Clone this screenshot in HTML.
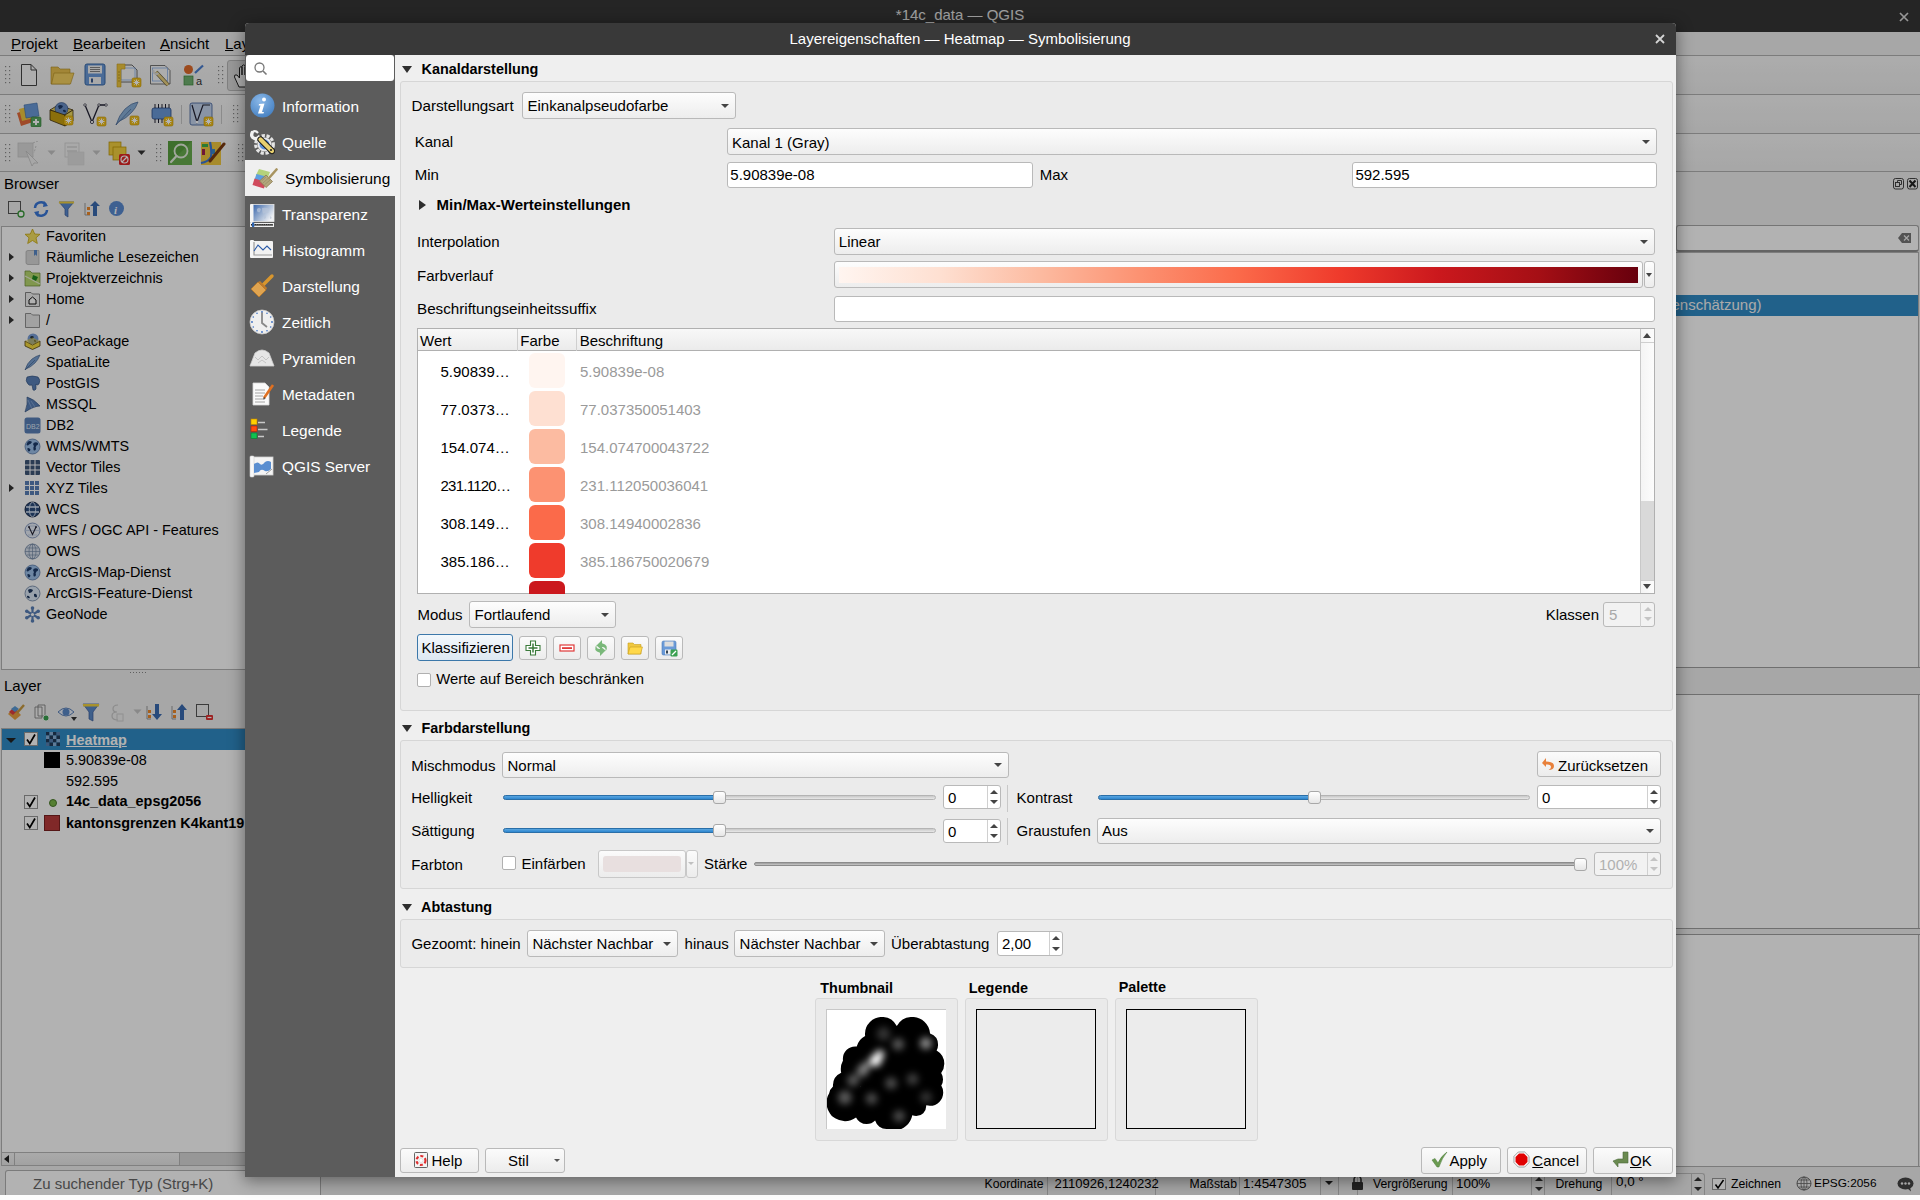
<!DOCTYPE html><html><head><meta charset="utf-8"><style>
*{margin:0;padding:0;box-sizing:border-box}
html,body{width:1920px;height:1200px;overflow:hidden;background:#fdfdfd;font-family:"Liberation Sans",sans-serif}
.t{position:absolute;white-space:nowrap}
.a{position:absolute}
</style></head><body><div class="a" style="left:0;top:0;width:1920px;height:1195px;background:#efefef;overflow:hidden">
<div style="position:absolute;left:0px;top:0px;width:1920px;height:32px;background:#363636"></div>
<div class="t" style="left:960px;top:7.30px;font-size:15px;line-height:15px;font-weight:400;color:#e6e6e6;transform:translateX(-50%)">*14c_data — QGIS</div>
<svg class="a" style="left:1899px;top:12px" width="10" height="10"><path d="M1 1 L9 9 M9 1 L1 9" stroke="#d8d8d8" stroke-width="1.7"/></svg>
<div class="t" style="left:11px;top:36.30px;font-size:15px;line-height:15px;font-weight:400;color:#000;"><u>P</u>rojekt</div>
<div class="t" style="left:73px;top:36.30px;font-size:15px;line-height:15px;font-weight:400;color:#000;"><u>B</u>earbeiten</div>
<div class="t" style="left:160px;top:36.30px;font-size:15px;line-height:15px;font-weight:400;color:#000;"><u>A</u>nsicht</div>
<div class="t" style="left:225px;top:36.30px;font-size:15px;line-height:15px;font-weight:400;color:#000;"><u>L</u>ayer</div>
<div style="position:absolute;left:0px;top:55px;width:1920px;height:1px;background:#b2b2b2"></div>
<div style="position:absolute;left:0px;top:94px;width:1920px;height:1px;background:#b2b2b2"></div>
<div style="position:absolute;left:0px;top:133px;width:1920px;height:1px;background:#b2b2b2"></div>
<div style="position:absolute;left:0px;top:171px;width:1920px;height:1px;background:#b2b2b2"></div>
<div style="position:absolute;left:0px;top:56px;width:1920px;height:38px;background:linear-gradient(#f7f7f7,#efefef)"></div>
<div style="position:absolute;left:0px;top:95px;width:1920px;height:38px;background:linear-gradient(#f7f7f7,#efefef)"></div>
<div style="position:absolute;left:0px;top:134px;width:1920px;height:37px;background:linear-gradient(#f7f7f7,#efefef)"></div>
<div class="t" style="left:4px;top:176.30px;font-size:15px;line-height:15px;font-weight:400;color:#000;">Browser</div>
<div style="position:absolute;left:1px;top:226px;width:260px;height:444px;border-top:1px solid #b4b4b4;border-left:1px solid #b4b4b4;border-bottom:1px solid #b4b4b4;background:#fff"></div>
<div class="t" style="left:46px;top:229.41px;font-size:14.4px;line-height:14.4px;font-weight:400;color:#000;">Favoriten</div>
<div class="t" style="left:46px;top:250.41px;font-size:14.4px;line-height:14.4px;font-weight:400;color:#000;">Räumliche Lesezeichen</div>
<div class="a" style="left:9px;top:253.1px;width:0;height:0;border-left:5px solid #333;border-top:4px solid transparent;border-bottom:4px solid transparent"></div>
<div class="t" style="left:46px;top:271.41px;font-size:14.4px;line-height:14.4px;font-weight:400;color:#000;">Projektverzeichnis</div>
<div class="a" style="left:9px;top:274.1px;width:0;height:0;border-left:5px solid #333;border-top:4px solid transparent;border-bottom:4px solid transparent"></div>
<div class="t" style="left:46px;top:292.41px;font-size:14.4px;line-height:14.4px;font-weight:400;color:#000;">Home</div>
<div class="a" style="left:9px;top:295.1px;width:0;height:0;border-left:5px solid #333;border-top:4px solid transparent;border-bottom:4px solid transparent"></div>
<div class="t" style="left:46px;top:313.41px;font-size:14.4px;line-height:14.4px;font-weight:400;color:#000;">/</div>
<div class="a" style="left:9px;top:316.1px;width:0;height:0;border-left:5px solid #333;border-top:4px solid transparent;border-bottom:4px solid transparent"></div>
<div class="t" style="left:46px;top:334.41px;font-size:14.4px;line-height:14.4px;font-weight:400;color:#000;">GeoPackage</div>
<div class="t" style="left:46px;top:355.41px;font-size:14.4px;line-height:14.4px;font-weight:400;color:#000;">SpatiaLite</div>
<div class="t" style="left:46px;top:376.41px;font-size:14.4px;line-height:14.4px;font-weight:400;color:#000;">PostGIS</div>
<div class="t" style="left:46px;top:397.41px;font-size:14.4px;line-height:14.4px;font-weight:400;color:#000;">MSSQL</div>
<div class="t" style="left:46px;top:418.41px;font-size:14.4px;line-height:14.4px;font-weight:400;color:#000;">DB2</div>
<div class="t" style="left:46px;top:439.41px;font-size:14.4px;line-height:14.4px;font-weight:400;color:#000;">WMS/WMTS</div>
<div class="t" style="left:46px;top:460.41px;font-size:14.4px;line-height:14.4px;font-weight:400;color:#000;">Vector Tiles</div>
<div class="t" style="left:46px;top:481.41px;font-size:14.4px;line-height:14.4px;font-weight:400;color:#000;">XYZ Tiles</div>
<div class="a" style="left:9px;top:484.1px;width:0;height:0;border-left:5px solid #333;border-top:4px solid transparent;border-bottom:4px solid transparent"></div>
<div class="t" style="left:46px;top:502.41px;font-size:14.4px;line-height:14.4px;font-weight:400;color:#000;">WCS</div>
<div class="t" style="left:46px;top:523.41px;font-size:14.4px;line-height:14.4px;font-weight:400;color:#000;">WFS / OGC API - Features</div>
<div class="t" style="left:46px;top:544.41px;font-size:14.4px;line-height:14.4px;font-weight:400;color:#000;">OWS</div>
<div class="t" style="left:46px;top:565.41px;font-size:14.4px;line-height:14.4px;font-weight:400;color:#000;">ArcGIS-Map-Dienst</div>
<div class="t" style="left:46px;top:586.41px;font-size:14.4px;line-height:14.4px;font-weight:400;color:#000;">ArcGIS-Feature-Dienst</div>
<div class="t" style="left:46px;top:607.41px;font-size:14.4px;line-height:14.4px;font-weight:400;color:#000;">GeoNode</div>
<div style="position:absolute;left:0px;top:670px;width:260px;height:4px;background:#efefef"></div>
<div style="position:absolute;left:130px;top:672px;width:1px;height:1px;background:#888"></div>
<div style="position:absolute;left:133px;top:672px;width:1px;height:1px;background:#888"></div>
<div style="position:absolute;left:136px;top:672px;width:1px;height:1px;background:#888"></div>
<div style="position:absolute;left:139px;top:672px;width:1px;height:1px;background:#888"></div>
<div style="position:absolute;left:142px;top:672px;width:1px;height:1px;background:#888"></div>
<div style="position:absolute;left:145px;top:672px;width:1px;height:1px;background:#888"></div>
<div style="position:absolute;left:1690px;top:670px;width:1px;height:1px;background:#888"></div>
<div style="position:absolute;left:1690px;top:930px;width:1px;height:1px;background:#888"></div>
<div style="position:absolute;left:1693px;top:670px;width:1px;height:1px;background:#888"></div>
<div style="position:absolute;left:1693px;top:930px;width:1px;height:1px;background:#888"></div>
<div style="position:absolute;left:1696px;top:670px;width:1px;height:1px;background:#888"></div>
<div style="position:absolute;left:1696px;top:930px;width:1px;height:1px;background:#888"></div>
<div style="position:absolute;left:1699px;top:670px;width:1px;height:1px;background:#888"></div>
<div style="position:absolute;left:1699px;top:930px;width:1px;height:1px;background:#888"></div>
<div style="position:absolute;left:1702px;top:670px;width:1px;height:1px;background:#888"></div>
<div style="position:absolute;left:1702px;top:930px;width:1px;height:1px;background:#888"></div>
<div style="position:absolute;left:1705px;top:670px;width:1px;height:1px;background:#888"></div>
<div style="position:absolute;left:1705px;top:930px;width:1px;height:1px;background:#888"></div>
<div class="t" style="left:4px;top:678.30px;font-size:15px;line-height:15px;font-weight:400;color:#000;">Layer</div>
<div style="position:absolute;left:1px;top:728px;width:260px;height:424px;border-top:1px solid #b4b4b4;border-left:1px solid #b4b4b4;background:#fff"></div>
<div style="position:absolute;left:2px;top:729px;width:258px;height:21px;background:#308cc6"></div>
<div class="t" style="left:66px;top:732.51px;font-size:14.4px;line-height:14.4px;font-weight:700;color:#fff;"><u>Heatmap</u></div>
<div class="t" style="left:66px;top:753.41px;font-size:14.4px;line-height:14.4px;font-weight:400;color:#000;">5.90839e-08</div>
<div style="position:absolute;left:44px;top:752px;width:16px;height:16px;background:#000"></div>
<div class="t" style="left:66px;top:774.21px;font-size:14.4px;line-height:14.4px;font-weight:400;color:#000;">592.595</div>
<div class="t" style="left:66px;top:794.41px;font-size:14.4px;line-height:14.4px;font-weight:700;color:#000;">14c_data_epsg2056</div>
<div class="t" style="left:66px;top:815.81px;font-size:14.4px;line-height:14.4px;font-weight:700;color:#000;">kantonsgrenzen K4kant19</div>
<div style="position:absolute;left:44px;top:815px;width:16px;height:16px;background:#b83a3a;border:1px solid #7a2020"></div>
<div style="position:absolute;left:24px;top:732px;width:14px;height:14px;background:#fff;border:1px solid #999"></div>
<svg class="a" style="left:25px;top:733px" width="12" height="12"><path d="M2 6.5 L4.8 10.5 L10 1.5" stroke="#000" stroke-width="1.7" fill="none"/></svg>
<div style="position:absolute;left:24px;top:795px;width:14px;height:14px;background:#fff;border:1px solid #999"></div>
<svg class="a" style="left:25px;top:796px" width="12" height="12"><path d="M2 6.5 L4.8 10.5 L10 1.5" stroke="#000" stroke-width="1.7" fill="none"/></svg>
<div style="position:absolute;left:24px;top:816px;width:14px;height:14px;background:#fff;border:1px solid #999"></div>
<svg class="a" style="left:25px;top:817px" width="12" height="12"><path d="M2 6.5 L4.8 10.5 L10 1.5" stroke="#000" stroke-width="1.7" fill="none"/></svg>
<div class="a" style="left:6px;top:738px;width:0;height:0;border-top:5px solid #222;border-left:5px solid transparent;border-right:5px solid transparent"></div>
<div style="position:absolute;left:48.5px;top:798.5px;width:8px;height:8px;background:#7ab648;border-radius:50%;border:1px solid #4a7a2a"></div>
<div style="position:absolute;left:1px;top:1152px;width:260px;height:14px;background:linear-gradient(#f4f4f4,#e8e8e8);border:1px solid #b8b8b8"></div>
<div style="position:absolute;left:14px;top:1152px;width:1px;height:14px;background:#b8b8b8"></div>
<div style="position:absolute;left:179px;top:1153px;width:82px;height:12px;background:#d8d8d8;border-left:1px solid #b8b8b8"></div>
<div class="a" style="left:4px;top:1155px;width:0;height:0;border-right:5px solid #222;border-top:4px solid transparent;border-bottom:4px solid transparent"></div>
<svg class="a" style="left:11px;top:1175px" width="15" height="15"><circle cx="6" cy="6" r="4.5" fill="none" stroke="#666" stroke-width="1.4"/><line x1="9.3" y1="9.3" x2="13.5" y2="13.5" stroke="#666" stroke-width="1.8"/></svg>
<div style="position:absolute;left:5px;top:1170px;width:316px;height:25px;background:#fff;border:1px solid #b0b0b0;border-bottom:none;border-radius:3px 3px 0 0"></div>
<div class="t" style="left:33px;top:1176.30px;font-size:15px;line-height:15px;font-weight:400;color:#666;">Zu suchender Typ (Strg+K)</div>
<div style="position:absolute;left:1676px;top:225px;width:243px;height:27px;background:#fff;border:1px solid #a8a8a8;border-bottom:2px solid #909090;border-radius:3px"></div>
<svg class="a" style="left:1897px;top:232px" width="15" height="12"><path d="M1 6 L5 1 H14 V11 H5 Z" fill="#777"/><path d="M7 3.5 L12 8.5 M12 3.5 L7 8.5" stroke="#efefef" stroke-width="1.2"/></svg>
<svg class="a" style="left:1893px;top:178px" width="26" height="12"><rect x="0.5" y="0.5" width="10" height="10.5" rx="2" fill="none" stroke="#333" stroke-width="0.9"/><rect x="2.5" y="4.5" width="4" height="4" fill="none" stroke="#333" stroke-width="0.9"/><path d="M4.5 4.5 V2.5 H8.5 V6.5 H6.5" fill="none" stroke="#333" stroke-width="0.9"/><rect x="14.5" y="0.5" width="10" height="10.5" rx="2" fill="none" stroke="#333" stroke-width="0.9"/><path d="M16.5 2.5 L22.5 9 M22.5 2.5 L16.5 9" stroke="#222" stroke-width="2"/></svg>
<svg class="a" style="left:1893px;top:678px" width="26" height="12"><rect x="0.5" y="0.5" width="10" height="10.5" rx="2" fill="none" stroke="#333" stroke-width="0.9"/><rect x="2.5" y="4.5" width="4" height="4" fill="none" stroke="#333" stroke-width="0.9"/><path d="M4.5 4.5 V2.5 H8.5 V6.5 H6.5" fill="none" stroke="#333" stroke-width="0.9"/><rect x="14.5" y="0.5" width="10" height="10.5" rx="2" fill="none" stroke="#333" stroke-width="0.9"/><path d="M16.5 2.5 L22.5 9 M22.5 2.5 L16.5 9" stroke="#222" stroke-width="2"/></svg>
<div style="position:absolute;left:1676px;top:252px;width:243px;height:415px;border-top:1px solid #b4b4b4;border-right:1px solid #b4b4b4;background:#fff"></div>
<div style="position:absolute;left:1676px;top:295px;width:242px;height:21px;background:#308cc6"></div>
<div class="t" style="left:1538.1px;top:297.30px;font-size:15px;line-height:15px;font-weight:400;color:#f4f4f4;">Heatmap (Kerndichtenschätzung)</div>
<div style="position:absolute;left:1676px;top:667px;width:244px;height:1px;background:#a0a0a0"></div>
<div style="position:absolute;left:1676px;top:668px;width:244px;height:27px;background:#efefef"></div>
<div style="position:absolute;left:1676px;top:694px;width:244px;height:1px;background:#a0a0a0"></div>
<div style="position:absolute;left:1676px;top:695px;width:243px;height:233px;background:#fff;border-right:1px solid #b4b4b4"></div>
<div style="position:absolute;left:1676px;top:935px;width:243px;height:231px;background:#fff;border-right:1px solid #b4b4b4"></div>
<div style="position:absolute;left:1676px;top:928px;width:244px;height:1px;background:#a0a0a0"></div>
<div style="position:absolute;left:1676px;top:929px;width:244px;height:5px;background:#efefef"></div>
<div style="position:absolute;left:1676px;top:934px;width:244px;height:1px;background:#a0a0a0"></div>
<div style="position:absolute;left:1676px;top:1166px;width:244px;height:1px;background:#b0b0b0"></div>
<div class="t" style="left:984.5px;top:1177.67px;font-size:12.2px;line-height:12.2px;font-weight:400;color:#000;">Koordinate</div>
<div style="position:absolute;left:1047px;top:1173px;width:109px;height:22px;background:#efefef;border:1px solid #c0c0c0;border-bottom:none;border-radius:3px 3px 0 0"></div>
<div class="t" style="left:1054.5px;top:1176.95px;font-size:13.054px;line-height:13.054px;font-weight:400;color:#000;">2110926,1240232</div>
<div class="t" style="left:1189.5px;top:1177.67px;font-size:12.2px;line-height:12.2px;font-weight:400;color:#000;">Maßstab</div>
<div style="position:absolute;left:1239px;top:1173px;width:100px;height:22px;background:#efefef;border:1px solid #c0c0c0;border-bottom:none"></div>
<div style="position:absolute;left:1320px;top:1173px;width:1px;height:22px;background:#c0c0c0"></div>
<div class="t" style="left:1243px;top:1176.64px;font-size:13.42px;line-height:13.42px;font-weight:400;color:#000;">1:4547305</div>
<div class="a" style="left:1325px;top:1181px;width:0;height:0;border-top:4px solid #222;border-left:4px solid transparent;border-right:4px solid transparent"></div>
<div style="position:absolute;left:1357px;top:1173px;width:1px;height:22px;background:#c0c0c0"></div>
<svg class="a" style="left:1351px;top:1175px" width="13" height="15"><path d="M3 7 V4.5 a3.5 3.5 0 0 1 7 0 V7" stroke="#333" stroke-width="1.6" fill="none"/><rect x="1" y="7" width="11" height="8" rx="1" fill="#333"/></svg>
<div class="t" style="left:1373px;top:1177.67px;font-size:12.2px;line-height:12.2px;font-weight:400;color:#000;">Vergrößerung</div>
<div style="position:absolute;left:1452px;top:1173px;width:93px;height:22px;background:#efefef;border:1px solid #c0c0c0;border-bottom:none"></div>
<div style="position:absolute;left:1531px;top:1173px;width:1px;height:22px;background:#c0c0c0"></div>
<div class="t" style="left:1456px;top:1176.64px;font-size:13.42px;line-height:13.42px;font-weight:400;color:#000;">100%</div>
<div class="t" style="left:1555.5px;top:1177.67px;font-size:12.2px;line-height:12.2px;font-weight:400;color:#000;">Drehung</div>
<div style="position:absolute;left:1611px;top:1173px;width:94px;height:22px;background:#efefef;border:1px solid #c0c0c0;border-bottom:none;border-radius:3px 3px 0 0"></div>
<div style="position:absolute;left:1691px;top:1173px;width:1px;height:22px;background:#c0c0c0"></div>
<div class="t" style="left:1616px;top:1174.64px;font-size:13.42px;line-height:13.42px;font-weight:400;color:#000;">0,0 °</div>
<div class="a" style="left:1535px;top:1177px;width:0;height:0;border-bottom:4px solid #333;border-left:4px solid transparent;border-right:4px solid transparent"></div>
<div class="a" style="left:1535px;top:1187px;width:0;height:0;border-top:4px solid #333;border-left:4px solid transparent;border-right:4px solid transparent"></div>
<div class="a" style="left:1694px;top:1177px;width:0;height:0;border-bottom:4px solid #333;border-left:4px solid transparent;border-right:4px solid transparent"></div>
<div class="a" style="left:1694px;top:1187px;width:0;height:0;border-top:4px solid #333;border-left:4px solid transparent;border-right:4px solid transparent"></div>
<div style="position:absolute;left:1712px;top:1178px;width:14px;height:12px;background:#fff;border:1px solid #999"></div>
<svg class="a" style="left:1714px;top:1179px" width="11" height="11"><path d="M1.5 5.5 L4 9 L9.5 1" stroke="#000" stroke-width="1.5" fill="none"/></svg>
<div class="t" style="left:1731px;top:1177.67px;font-size:12.2px;line-height:12.2px;font-weight:400;color:#000;">Zeichnen</div>
<svg class="a" style="left:1796px;top:1176px" width="16" height="15"><ellipse cx="8" cy="7.5" rx="7" ry="6.5" fill="none" stroke="#666" stroke-width="1"/><path d="M1 7.5 H15 M8 1 V14 M3 4 H13 M3 11 H13" stroke="#666" stroke-width="0.8"/><ellipse cx="8" cy="7.5" rx="3" ry="6.5" fill="none" stroke="#666" stroke-width="0.8"/></svg>
<div class="t" style="left:1814px;top:1177.98px;font-size:11.834px;line-height:11.834px;font-weight:400;color:#000;">EPSG:2056</div>
<svg class="a" style="left:1897px;top:1177px" width="17" height="15"><ellipse cx="8.5" cy="6.5" rx="8" ry="6" fill="#444"/><path d="M10 11 L14 14.5 L13 10Z" fill="#444"/><circle cx="5" cy="6.5" r="1.2" fill="#eee"/><circle cx="8.5" cy="6.5" r="1.2" fill="#eee"/><circle cx="12" cy="6.5" r="1.2" fill="#eee"/></svg>
<div style="position:absolute;left:0px;top:1195px;width:1920px;height:5px;background:#fefefe"></div>
</div>
<svg class="a" style="left:5px;top:66px" width="6" height="18" viewBox="0 0 6 18"><rect x="0" y="0" width="1.2" height="1.2" fill="#8a8a8a"/><rect x="0" y="4" width="1.2" height="1.2" fill="#8a8a8a"/><rect x="0" y="8" width="1.2" height="1.2" fill="#8a8a8a"/><rect x="0" y="12" width="1.2" height="1.2" fill="#8a8a8a"/><rect x="0" y="16" width="1.2" height="1.2" fill="#8a8a8a"/><rect x="4" y="0" width="1.2" height="1.2" fill="#8a8a8a"/><rect x="4" y="4" width="1.2" height="1.2" fill="#8a8a8a"/><rect x="4" y="8" width="1.2" height="1.2" fill="#8a8a8a"/><rect x="4" y="12" width="1.2" height="1.2" fill="#8a8a8a"/><rect x="4" y="16" width="1.2" height="1.2" fill="#8a8a8a"/></svg>
<svg class="a" style="left:20px;top:63px" width="19" height="24" viewBox="0 0 19 24"><path d="M1.5 1.5 H11 L16.5 7 V22.5 H1.5 Z" fill="#f8f8f8" stroke="#444" stroke-width="1"/><path d="M11 1.5 V7 H16.5" fill="none" stroke="#444" stroke-width="1"/></svg>
<svg class="a" style="left:50px;top:65px" width="25" height="21" viewBox="0 0 25 21"><path d="M1 2 H8 L10 4 H20 V19 H1 Z" fill="#e8c050" stroke="#b08a20" stroke-width="0.6"/><path d="M1.5 19 L4 8 H24 L20.5 19 Z" fill="#f4d060" stroke="#b08a20" stroke-width="0.6"/></svg>
<svg class="a" style="left:84px;top:63px" width="22" height="23" viewBox="0 0 22 23"><rect x="1" y="1" width="20" height="21" rx="2" fill="#6a9ad8" stroke="#3a6aa8" stroke-width="1"/><rect x="4" y="2.5" width="14" height="8" fill="#f2f2f2"/><path d="M6 4.5 H16 M6 6.5 H16 M6 8.5 H16" stroke="#555" stroke-width="0.7"/><rect x="5" y="14" width="12" height="7" fill="#f2f2f2"/><rect x="7" y="15.5" width="2" height="4" fill="#3a5a90"/></svg>
<svg class="a" style="left:116px;top:63px" width="26" height="25" viewBox="0 0 26 25"><path d="M3 2 H16 L21 7 V19 H3 Z" fill="#f8f8f8" stroke="#444" stroke-width="0.8"/><rect x="5" y="5" width="14" height="12" fill="none" stroke="#8ab0e8" stroke-width="0.8"/><path d="M1 1 H9 V6 H5 V24 H1 Z" fill="#f0c840" stroke="#c89a20" stroke-width="0.6"/><path d="M2 9 H4 M2 12 H4 M2 15 H4 M2 18 H4" stroke="#9a7a10" stroke-width="0.6"/><rect x="16" y="15" width="9" height="9" rx="1.5" fill="#f0c020" stroke="#c89600" stroke-width="0.6"/><path d="M20.5 16.5 V22.5 M17.5 19.5 H23.5 M18.3 17.3 L22.7 21.7 M22.7 17.3 L18.3 21.7" stroke="#fff" stroke-width="1"/></svg>
<svg class="a" style="left:149px;top:64px" width="25" height="25" viewBox="0 0 25 25"><path d="M1.5 1.5 H16 L21 6.5 V20 H1.5 Z" fill="#f8f8f8" stroke="#555" stroke-width="0.8"/><rect x="3.5" y="4" width="15" height="13" fill="none" stroke="#8ab0e8" stroke-width="0.8"/><path d="M7 8 L19 21" stroke="#5a5030" stroke-width="4"/><path d="M7 8 L19 21" stroke="#e8d080" stroke-width="2.6"/><path d="M4.5 6 a3 3 0 0 0 5 3" stroke="#ddd" stroke-width="2" fill="none"/></svg>
<svg class="a" style="left:183px;top:64px" width="24" height="23" viewBox="0 0 24 23"><circle cx="5.5" cy="5.5" r="4.5" fill="#e06a2a"/><path d="M12 9 L20 1.5" stroke="#4a7ed0" stroke-width="2.2"/><rect x="1" y="12" width="9" height="9" fill="#70b070" stroke="#3a8a3a" stroke-width="0.7"/><text x="13" y="21" font-size="11" font-family="Liberation Sans" fill="#333">a</text></svg>
<svg class="a" style="left:218px;top:66px" width="6" height="18" viewBox="0 0 6 18"><rect x="0" y="0" width="1.2" height="1.2" fill="#8a8a8a"/><rect x="0" y="4" width="1.2" height="1.2" fill="#8a8a8a"/><rect x="0" y="8" width="1.2" height="1.2" fill="#8a8a8a"/><rect x="0" y="12" width="1.2" height="1.2" fill="#8a8a8a"/><rect x="0" y="16" width="1.2" height="1.2" fill="#8a8a8a"/><rect x="4" y="0" width="1.2" height="1.2" fill="#8a8a8a"/><rect x="4" y="4" width="1.2" height="1.2" fill="#8a8a8a"/><rect x="4" y="8" width="1.2" height="1.2" fill="#8a8a8a"/><rect x="4" y="12" width="1.2" height="1.2" fill="#8a8a8a"/><rect x="4" y="16" width="1.2" height="1.2" fill="#8a8a8a"/></svg>
<div style="position:absolute;left:227px;top:60px;width:30px;height:31px;background:#dcdcdc;border:1px solid #b8b8b8;border-radius:3px"></div>
<svg class="a" style="left:233px;top:64px" width="22" height="24" viewBox="0 0 22 24"><path d="M6 23 L1.5 13 Q1 10 4 11 L6.5 14 V4 Q7 2 9 3 V11 V2 Q10 0 12 1.5 V11 V3 Q13 1 15 2.5 V12 V5 Q16 3.5 18 5 V15 Q17 21 14 23 Z" fill="#fff" stroke="#222" stroke-width="1"/></svg>
<svg class="a" style="left:5px;top:105px" width="6" height="18" viewBox="0 0 6 18"><rect x="0" y="0" width="1.2" height="1.2" fill="#8a8a8a"/><rect x="0" y="4" width="1.2" height="1.2" fill="#8a8a8a"/><rect x="0" y="8" width="1.2" height="1.2" fill="#8a8a8a"/><rect x="0" y="12" width="1.2" height="1.2" fill="#8a8a8a"/><rect x="0" y="16" width="1.2" height="1.2" fill="#8a8a8a"/><rect x="4" y="0" width="1.2" height="1.2" fill="#8a8a8a"/><rect x="4" y="4" width="1.2" height="1.2" fill="#8a8a8a"/><rect x="4" y="8" width="1.2" height="1.2" fill="#8a8a8a"/><rect x="4" y="12" width="1.2" height="1.2" fill="#8a8a8a"/><rect x="4" y="16" width="1.2" height="1.2" fill="#8a8a8a"/></svg>
<svg class="a" style="left:16px;top:102px" width="26" height="25" viewBox="0 0 26 25"><path d="M1 11 L13 7 L17 20 L5 24 Z" fill="#e46a3a"/><path d="M3 7 L15 4 L18 16 L6 19 Z" fill="#f0c840"/><path d="M8 3 L21 1 L23 14 L10 16 Z" fill="#6a9ad8" stroke="#3a6aa8" stroke-width="0.6"/><rect x="15" y="15" width="10" height="10" rx="1.5" fill="#5aa860" stroke="#2a7a30" stroke-width="0.6"/><path d="M20 17 V23 M17 20 H23" stroke="#fff" stroke-width="2"/></svg>
<svg class="a" style="left:49px;top:101px" width="26" height="26" viewBox="0 0 26 26"><path d="M1 9 L9 4 L24 9 L16 14 Z" fill="#e8d060" stroke="#403010" stroke-width="0.8"/><circle cx="12.5" cy="8" r="6.5" fill="#6a90c8" stroke="#2a4a80" stroke-width="0.6"/><path d="M9 5 Q11 3 14 5 Q13 8 10 8Z M14 9 Q17 8 17 11 Q15 12 14 10Z" fill="#1e3a68"/><path d="M1 9 L16 14 V25 L1 19 Z" fill="#c8a010" stroke="#403010" stroke-width="0.8"/><path d="M16 14 L24 9 V20 L16 25 Z" fill="#f0dc60" stroke="#403010" stroke-width="0.8"/><rect x="15" y="15" width="9" height="9" rx="1.5" fill="#f0c020" stroke="#c89600" stroke-width="0.6"/><path d="M19.5 16.5 V22.5 M16.5 19.5 H22.5 M17.3 17.3 L21.7 21.7 M21.7 17.3 L17.3 21.7" stroke="#fff" stroke-width="1"/></svg>
<svg class="a" style="left:82px;top:102px" width="26" height="25" viewBox="0 0 26 25"><path d="M3 3 L10 20 L17 3 L24 3" stroke="#223" stroke-width="1.3" fill="none"/><path d="M1.5 3 L3 1.5 L4.5 3 L3 4.5Z M15.5 3 L17 1.5 L18.5 3 L17 4.5Z M22.5 3 L24 1.5 L25.5 3 L24 4.5Z" fill="#fff" stroke="#223" stroke-width="0.8"/><circle cx="10" cy="20" r="1.6" fill="#fff" stroke="#223" stroke-width="0.8"/><rect x="15" y="15" width="9" height="9" rx="1.5" fill="#f0c020" stroke="#c89600" stroke-width="0.6"/><path d="M19.5 16.5 V22.5 M16.5 19.5 H22.5 M17.3 17.3 L21.7 21.7 M21.7 17.3 L17.3 21.7" stroke="#fff" stroke-width="1"/></svg>
<svg class="a" style="left:115px;top:101px" width="26" height="26" viewBox="0 0 26 26"><path d="M1 24 Q4 14 10 8 Q16 2 23 1 Q21 7 17 11 Q12 17 3 21 Z" fill="#8ab0d8" stroke="#4a6a98" stroke-width="0.7"/><path d="M1 24 L16 8" stroke="#4a6a98" stroke-width="0.7"/><rect x="15" y="15" width="9" height="9" rx="1.5" fill="#f0c020" stroke="#c89600" stroke-width="0.6"/><path d="M19.5 16.5 V22.5 M16.5 19.5 H22.5 M17.3 17.3 L21.7 21.7 M21.7 17.3 L17.3 21.7" stroke="#fff" stroke-width="1"/></svg>
<svg class="a" style="left:151px;top:103px" width="26" height="24" viewBox="0 0 26 24"><rect x="1" y="5" width="19" height="11" rx="2" fill="#6a9ad8" stroke="#2a4a88" stroke-width="0.8"/><path d="M4 1 V5 M7.5 1 V5 M11 1 V5 M14.5 1 V5 M18 1 V5 M4 16 V20 M7.5 16 V20 M11 16 V20" stroke="#223" stroke-width="1"/><rect x="13" y="14" width="9" height="9" rx="1.5" fill="#f0c020" stroke="#c89600" stroke-width="0.6"/><path d="M17.5 15.5 V21.5 M14.5 18.5 H20.5 M15.3 16.3 L19.7 20.7 M19.7 16.3 L15.3 20.7" stroke="#fff" stroke-width="1"/></svg>
<div style="position:absolute;left:181px;top:105px;width:1px;height:19px;background:#c8c8c8"></div>
<svg class="a" style="left:189px;top:102px" width="25" height="25" viewBox="0 0 25 25"><rect x="1" y="1" width="22" height="22" rx="2" fill="#c4d4ec" stroke="#3a5a98" stroke-width="0.8"/><path d="M3 3 L8 20 L14 3 L21 3" stroke="#223" stroke-width="1.2" fill="none"/><circle cx="8" cy="20" r="1.3" fill="#fff"/><rect x="15" y="15" width="9" height="9" rx="1.5" fill="#f0c020" stroke="#c89600" stroke-width="0.6"/><path d="M19.5 16.5 V22.5 M16.5 19.5 H22.5 M17.3 17.3 L21.7 21.7 M21.7 17.3 L17.3 21.7" stroke="#fff" stroke-width="1"/></svg>
<div style="position:absolute;left:221px;top:105px;width:1px;height:19px;background:#c8c8c8"></div>
<svg class="a" style="left:233px;top:105px" width="6" height="18" viewBox="0 0 6 18"><rect x="0" y="0" width="1.2" height="1.2" fill="#8a8a8a"/><rect x="0" y="4" width="1.2" height="1.2" fill="#8a8a8a"/><rect x="0" y="8" width="1.2" height="1.2" fill="#8a8a8a"/><rect x="0" y="12" width="1.2" height="1.2" fill="#8a8a8a"/><rect x="0" y="16" width="1.2" height="1.2" fill="#8a8a8a"/><rect x="4" y="0" width="1.2" height="1.2" fill="#8a8a8a"/><rect x="4" y="4" width="1.2" height="1.2" fill="#8a8a8a"/><rect x="4" y="8" width="1.2" height="1.2" fill="#8a8a8a"/><rect x="4" y="12" width="1.2" height="1.2" fill="#8a8a8a"/><rect x="4" y="16" width="1.2" height="1.2" fill="#8a8a8a"/></svg>
<svg class="a" style="left:5px;top:144px" width="6" height="18" viewBox="0 0 6 18"><rect x="0" y="0" width="1.2" height="1.2" fill="#8a8a8a"/><rect x="0" y="4" width="1.2" height="1.2" fill="#8a8a8a"/><rect x="0" y="8" width="1.2" height="1.2" fill="#8a8a8a"/><rect x="0" y="12" width="1.2" height="1.2" fill="#8a8a8a"/><rect x="0" y="16" width="1.2" height="1.2" fill="#8a8a8a"/><rect x="4" y="0" width="1.2" height="1.2" fill="#8a8a8a"/><rect x="4" y="4" width="1.2" height="1.2" fill="#8a8a8a"/><rect x="4" y="8" width="1.2" height="1.2" fill="#8a8a8a"/><rect x="4" y="12" width="1.2" height="1.2" fill="#8a8a8a"/><rect x="4" y="16" width="1.2" height="1.2" fill="#8a8a8a"/></svg>
<svg class="a" style="left:16px;top:141px" width="26" height="26" viewBox="0 0 26 26"><rect x="2" y="2" width="15" height="14" fill="#dcdcdc" stroke="#c8c8c8" stroke-width="0.8"/><path d="M17 2 L22 0 M20 5 L18 12" stroke="#c8c8c8" stroke-dasharray="2 1.5"/><path d="M10 10 L22 22 L18 22 L16 25 Z" fill="#f0f0f0" stroke="#c0c0c0" stroke-width="0.8"/></svg>
<svg class="a" style="left:47px;top:150px" width="9" height="6" viewBox="0 0 9 6"><path d="M0.5 0.5 H8.5 L4.5 5 Z" fill="#c4c4c4"/></svg>
<svg class="a" style="left:64px;top:142px" width="22" height="24" viewBox="0 0 22 24"><rect x="1" y="1" width="14" height="14" fill="#f2f2f2" stroke="#d0d0d0" stroke-width="0.8"/><rect x="4" y="10" width="16" height="13" fill="#e0e0e0" stroke="#d6d6d6" stroke-width="0.6"/><path d="M3 5 H13 M3 9 H13" stroke="#d4d4d4" stroke-width="1.5"/></svg>
<svg class="a" style="left:92px;top:150px" width="9" height="6" viewBox="0 0 9 6"><path d="M0.5 0.5 H8.5 L4.5 5 Z" fill="#c4c4c4"/></svg>
<svg class="a" style="left:108px;top:141px" width="24" height="26" viewBox="0 0 24 26"><rect x="1" y="1" width="12" height="13" fill="#f4d040" stroke="#b89000" stroke-width="0.7"/><rect x="5" y="6" width="13" height="13" fill="#f4d040" stroke="#b89000" stroke-width="0.7"/><rect x="11" y="13" width="11" height="11" rx="1.5" fill="#e02828"/><circle cx="16.5" cy="18.5" r="3.5" fill="none" stroke="#fff" stroke-width="1.2"/><path d="M14 21 L19 16" stroke="#fff" stroke-width="1.2"/></svg>
<svg class="a" style="left:137px;top:150px" width="9" height="6" viewBox="0 0 9 6"><path d="M0.5 0.5 H8.5 L4.5 5 Z" fill="#333"/></svg>
<svg class="a" style="left:156px;top:144px" width="6" height="18" viewBox="0 0 6 18"><rect x="0" y="0" width="1.2" height="1.2" fill="#8a8a8a"/><rect x="0" y="4" width="1.2" height="1.2" fill="#8a8a8a"/><rect x="0" y="8" width="1.2" height="1.2" fill="#8a8a8a"/><rect x="0" y="12" width="1.2" height="1.2" fill="#8a8a8a"/><rect x="0" y="16" width="1.2" height="1.2" fill="#8a8a8a"/><rect x="4" y="0" width="1.2" height="1.2" fill="#8a8a8a"/><rect x="4" y="4" width="1.2" height="1.2" fill="#8a8a8a"/><rect x="4" y="8" width="1.2" height="1.2" fill="#8a8a8a"/><rect x="4" y="12" width="1.2" height="1.2" fill="#8a8a8a"/><rect x="4" y="16" width="1.2" height="1.2" fill="#8a8a8a"/></svg>
<svg class="a" style="left:168px;top:141px" width="25" height="25" viewBox="0 0 25 25"><rect x="0" y="0" width="24" height="24" fill="#5aa040"/><path d="M0 24 L24 0 V24Z" fill="#70b458" opacity="0.6"/><circle cx="13" cy="10" r="6.5" fill="none" stroke="#e8f0e0" stroke-width="1.8"/><path d="M8.5 15 L3 21" stroke="#e8f0e0" stroke-width="2.2" stroke-linecap="round"/></svg>
<svg class="a" style="left:200px;top:141px" width="26" height="25" viewBox="0 0 26 25"><rect x="1" y="1" width="20" height="23" fill="#f0c840"/><path d="M10 1 Q12 10 11 16 Q8 21 1 22" stroke="#3a78d8" stroke-width="2.2" fill="none"/><rect x="2" y="3" width="6" height="3" fill="#3ab04a"/><rect x="2" y="8" width="3" height="6" fill="#a02050"/><rect x="12" y="8" width="3" height="5" fill="#3a8ac8"/><path d="M10 20 L24 3" stroke="#7a3a10" stroke-width="3" stroke-linecap="round"/></svg>
<svg class="a" style="left:238px;top:144px" width="6" height="18" viewBox="0 0 6 18"><rect x="0" y="0" width="1.2" height="1.2" fill="#8a8a8a"/><rect x="0" y="4" width="1.2" height="1.2" fill="#8a8a8a"/><rect x="0" y="8" width="1.2" height="1.2" fill="#8a8a8a"/><rect x="0" y="12" width="1.2" height="1.2" fill="#8a8a8a"/><rect x="0" y="16" width="1.2" height="1.2" fill="#8a8a8a"/><rect x="4" y="0" width="1.2" height="1.2" fill="#8a8a8a"/><rect x="4" y="4" width="1.2" height="1.2" fill="#8a8a8a"/><rect x="4" y="8" width="1.2" height="1.2" fill="#8a8a8a"/><rect x="4" y="12" width="1.2" height="1.2" fill="#8a8a8a"/><rect x="4" y="16" width="1.2" height="1.2" fill="#8a8a8a"/></svg>
<svg class="a" style="left:7px;top:200px" width="19" height="19" viewBox="0 0 19 19"><rect x="1.5" y="1.5" width="12" height="12" fill="none" stroke="#555" stroke-width="1"/><circle cx="14" cy="14" r="3" fill="#fff" stroke="#3a9a3a" stroke-width="1.3"/></svg>
<svg class="a" style="left:32px;top:200px" width="18" height="18" viewBox="0 0 18 18"><path d="M3 8 A6 6 0 0 1 14 5" stroke="#3a78d8" stroke-width="2.5" fill="none"/><path d="M15 10 A6 6 0 0 1 4 13" stroke="#3a78d8" stroke-width="2.5" fill="none"/><path d="M12 1 L16 6 L11 7 Z M6 17 L2 12 L7 11 Z" fill="#3a78d8"/></svg>
<svg class="a" style="left:58px;top:200px" width="17" height="18" viewBox="0 0 17 18"><path d="M1 2 H16 L10 9 V17 L7 15 V9 Z" fill="#5a8ad0" stroke="#3a5a98" stroke-width="0.7"/><rect x="1" y="1.5" width="15" height="2" fill="#f0d040"/></svg>
<svg class="a" style="left:83px;top:200px" width="18" height="17" viewBox="0 0 18 17"><path d="M2 3 V15 H7" stroke="#999" fill="none"/><rect x="4" y="7" width="3" height="3" fill="#f08a2a"/><rect x="4" y="12" width="3" height="3" fill="#f08a2a"/><path d="M10 16 V6 H7 L12 1 L17 6 H14 V16 Z" fill="#3a6ab0"/></svg>
<svg class="a" style="left:108px;top:200px" width="17" height="17" viewBox="0 0 17 17"><circle cx="8.5" cy="8.5" r="7.5" fill="#5a8ad0"/><text x="6" y="13.5" font-size="11" font-style="italic" font-weight="bold" font-family="Liberation Serif" fill="#fff">i</text></svg>
<svg class="a" style="left:24px;top:228px" width="17" height="17" viewBox="0 0 17 17"><path d="M8.5 1 L10.7 6 L16 6.3 L12 9.8 L13.3 15.5 L8.5 12.5 L3.7 15.5 L5 9.8 L1 6.3 L6.3 6 Z" fill="#f4e060" stroke="#c8a810" stroke-width="0.8"/></svg>
<svg class="a" style="left:24px;top:249px" width="17" height="17" viewBox="0 0 17 17"><path d="M2 3 Q2 1.5 4 1.5 H15 V15.5 H4 Q2 15.5 2 13.5 Z" fill="#d8d8d8" stroke="#aaa" stroke-width="0.7"/><path d="M10 1 V7 L11.5 5.5 L13 7 V1Z" fill="#5a88c8"/></svg>
<svg class="a" style="left:24px;top:270px" width="17" height="17" viewBox="0 0 17 17"><path d="M1 1 H6 L8 3 H16 V16 H1 Z" fill="#b8d870" stroke="#6a8a30" stroke-width="0.7"/><path d="M1 6 L16 14" stroke="#e8f0d0" stroke-width="1.2"/><path d="M9 5 L14 7 L12 11 L8 9Z" fill="#208a20"/></svg>
<svg class="a" style="left:24px;top:291px" width="17" height="17" viewBox="0 0 17 17"><path d="M1.5 1.5 H7 L8.5 3 H15.5 V15.5 H1.5 Z" fill="#f0f0f0" stroke="#666" stroke-width="0.8"/><path d="M5 13 V9 L8.5 6 L12 9 V13 Z" fill="#fff" stroke="#111" stroke-width="1"/></svg>
<svg class="a" style="left:24px;top:312px" width="17" height="17" viewBox="0 0 17 17"><path d="M1.5 1.5 H7 L8.5 3 H15.5 V15.5 H1.5 Z" fill="#e8e8e8" stroke="#777" stroke-width="0.8"/></svg>
<svg class="a" style="left:24px;top:333px" width="17" height="17" viewBox="0 0 17 17"><circle cx="9" cy="6" r="5.5" fill="#7aa0d8"/><path d="M6 4 Q8 2 10 4 Q9 6 7 6Z M10 7 Q12 6 12 9 Q11 10 10 8Z" fill="#234"/><path d="M1 8 L8.5 12 L16 8 V13 L8.5 16.5 L1 13 Z" fill="#f4d840" stroke="#504010" stroke-width="0.8"/><path d="M1 8 L8.5 4.5 L16 8 L8.5 12 Z" fill="#e8c830" opacity="0.5"/></svg>
<svg class="a" style="left:24px;top:354px" width="17" height="17" viewBox="0 0 17 17"><path d="M1 16 Q3 9 8 5 Q12 2 16 1 Q14 6 11 9 Q7 13 2 15 Z" fill="#7aa0d0" stroke="#3a5a88" stroke-width="0.6"/><path d="M1 16 L11 6" stroke="#3a5a88" stroke-width="0.6"/></svg>
<svg class="a" style="left:24px;top:375px" width="17" height="17" viewBox="0 0 17 17"><path d="M3 2 Q8 0 14 2 Q17 5 15 9 Q13 11 12 9 V14 Q11 16 9 15 L8 10 Q5 11 4 9 Q1 6 3 2Z" fill="#5a80b8" stroke="#2a4a78" stroke-width="0.6"/></svg>
<svg class="a" style="left:24px;top:396px" width="17" height="17" viewBox="0 0 17 17"><path d="M1 16 Q4 8 3 1 Q10 3 16 10 Q10 10 1 16Z" fill="#5a80b8" stroke="#2a4a78" stroke-width="0.6"/><path d="M4 4 L8 13 M7 5 L11 11" stroke="#9ab8e0" stroke-width="0.6"/></svg>
<svg class="a" style="left:24px;top:417px" width="17" height="17" viewBox="0 0 17 17"><rect x="0.5" y="0.5" width="16" height="16" rx="2.5" fill="#5a80b8"/><text x="2" y="11.5" font-size="7" font-family="Liberation Sans" fill="#dfe8f4">DB2</text></svg>
<svg class="a" style="left:24px;top:438px" width="17" height="17" viewBox="0 0 17 17"><circle cx="8.5" cy="8.5" r="7.5" fill="#9cc0ea" stroke="#5a7aa8" stroke-width="0.8"/><path d="M4 3.5 Q6.5 2.5 8 4 Q7 6 5 6.5 Q4 8 2.5 7 Q2.5 5 4 3.5Z M9.5 5 Q12 3.5 14 5 Q14.5 7 12.5 7.5 Q11 9 12 11 Q11 13.5 9.5 12 Q9 9 10 8 Q8.5 7 9.5 5Z M3.5 10 Q5.5 9.5 6.5 11.5 Q6 14 4.5 13.5 Q3 12 3.5 10Z" fill="#1e3c6a"/></svg>
<svg class="a" style="left:24px;top:459px" width="17" height="17" viewBox="0 0 17 17"><rect x="1" y="1" width="15" height="15" rx="1" fill="#3e5678"/><path d="M1 6 H16 M1 11 H16 M6 1 V16 M11 1 V16" stroke="#fff" stroke-width="1"/></svg>
<svg class="a" style="left:24px;top:480px" width="17" height="17" viewBox="0 0 17 17"><rect x="1" y="1" width="4" height="4" fill="#5a80b8"/><rect x="1" y="6" width="4" height="4" fill="#5a80b8"/><rect x="1" y="11" width="4" height="4" fill="#5a80b8"/><rect x="6" y="1" width="4" height="4" fill="#5a80b8"/><rect x="6" y="6" width="4" height="4" fill="#5a80b8"/><rect x="6" y="11" width="4" height="4" fill="#5a80b8"/><rect x="11" y="1" width="4" height="4" fill="#5a80b8"/><rect x="11" y="6" width="4" height="4" fill="#5a80b8"/><rect x="11" y="11" width="4" height="4" fill="#5a80b8"/></svg>
<svg class="a" style="left:24px;top:501px" width="17" height="17" viewBox="0 0 17 17"><circle cx="8.5" cy="8.5" r="7.5" fill="#2c4c7c" stroke="#1a2a48" stroke-width="1"/><path d="M2 6 H15 M2 11 H15" stroke="#d8e4f4" stroke-width="1.6"/><ellipse cx="8.5" cy="8.5" rx="3.2" ry="7.3" fill="none" stroke="#d8e4f4" stroke-width="0.9"/></svg>
<svg class="a" style="left:24px;top:522px" width="17" height="17" viewBox="0 0 17 17"><circle cx="8.5" cy="8.5" r="7.5" fill="#e8eef8" stroke="#7a90b8" stroke-width="0.9"/><path d="M1.5 8.5 H15.5 M4 4 H13 M4 13 H13" stroke="#b0c0dc" stroke-width="0.7"/><path d="M5 5 L8.5 12.5 L12 5" stroke="#223" stroke-width="1.1" fill="none"/><circle cx="5" cy="5" r="0.9" fill="#223"/><circle cx="12" cy="5" r="0.9" fill="#223"/></svg>
<svg class="a" style="left:24px;top:543px" width="17" height="17" viewBox="0 0 17 17"><circle cx="8.5" cy="8.5" r="7.5" fill="#d8e0ec" stroke="#6a80a0" stroke-width="0.8"/><path d="M1 8.5 H16 M8.5 1 V16 M2.5 5 H14.5 M2.5 12 H14.5" stroke="#6a80a0" stroke-width="0.6"/><ellipse cx="8.5" cy="8.5" rx="3.5" ry="7.5" fill="none" stroke="#6a80a0" stroke-width="0.6"/></svg>
<svg class="a" style="left:24px;top:564px" width="17" height="17" viewBox="0 0 17 17"><circle cx="8.5" cy="8.5" r="7.5" fill="#9cc0ea" stroke="#5a7aa8" stroke-width="0.8"/><path d="M4 3.5 Q6.5 2.5 8 4 Q7 6 5 6.5 Q4 8 2.5 7 Q2.5 5 4 3.5Z M9.5 5 Q12 3.5 14 5 Q14.5 7 12.5 7.5 Q11 9 12 11 Q11 13.5 9.5 12 Q9 9 10 8 Q8.5 7 9.5 5Z M3.5 10 Q5.5 9.5 6.5 11.5 Q6 14 4.5 13.5 Q3 12 3.5 10Z" fill="#1e3c6a"/></svg>
<svg class="a" style="left:24px;top:585px" width="17" height="17" viewBox="0 0 17 17"><circle cx="8.5" cy="8.5" r="7.5" fill="#dce8f6" stroke="#6a80a0" stroke-width="0.8"/><path d="M4 5 Q6 3 9 5 Q8 8 5 8Z M10 9 Q13 8 13 12 Q11 13 10 11Z M3 11 Q5 10 6 13 Q4 14 3 12Z" fill="#203a60"/></svg>
<svg class="a" style="left:24px;top:606px" width="17" height="17" viewBox="0 0 17 17"><g stroke="#5a80b8" stroke-width="2.2" stroke-linecap="round"><path d="M8.5 2 V15 M2.8 5.2 L14.2 11.8 M2.8 11.8 L14.2 5.2"/></g><g fill="#5a80b8"><circle cx="8.5" cy="2" r="1.8"/><circle cx="8.5" cy="15" r="1.8"/><circle cx="2.8" cy="5.2" r="1.8"/><circle cx="14.2" cy="11.8" r="1.8"/><circle cx="2.8" cy="11.8" r="1.8"/><circle cx="14.2" cy="5.2" r="1.8"/></g><circle cx="8.5" cy="8.5" r="1.6" fill="#fff"/></svg>
<svg class="a" style="left:7px;top:703px" width="18" height="18" viewBox="0 0 18 18"><path d="M1 11 L7 5 L14 12 L8 17Z" fill="#e8a040"/><path d="M2 9 L6 5 L11 7 L6 12Z" fill="#e04040"/><path d="M4 6 L8 3 L12 6 L8 9Z" fill="#5a9ad6"/><path d="M10 10 L17 2" stroke="#c89a40" stroke-width="2.4"/></svg>
<svg class="a" style="left:32px;top:703px" width="18" height="19" viewBox="0 0 18 19"><path d="M3 4 H10 V15 H3Z M6 2 H13 V13 H6Z" fill="#f4f4f4" stroke="#777" stroke-width="0.8"/><circle cx="14" cy="15" r="3" fill="#3aa050" stroke="#fff" stroke-width="0.8"/></svg>
<svg class="a" style="left:57px;top:704px" width="20" height="18" viewBox="0 0 20 18"><path d="M1 8 Q9 0 17 8 Q9 16 1 8Z" fill="#e8eef8" stroke="#5a80b8" stroke-width="1"/><circle cx="9" cy="8" r="3.5" fill="#5a88c8"/><path d="M14 13 H20 L17 17Z" fill="#333"/></svg>
<svg class="a" style="left:82px;top:703px" width="18" height="19" viewBox="0 0 18 19"><path d="M1 1 H17 L11 9 V18 L7 16 V9 Z" fill="#5a88c8" stroke="#3a5a98" stroke-width="0.7"/><rect x="1" y="1" width="16" height="2.5" fill="#f0d040"/></svg>
<svg class="a" style="left:108px;top:703px" width="22" height="19" viewBox="0 0 22 19"><path d="M10 2 Q5 2 5 6 Q5 9 9 9 Q4 9 4 13 Q4 17 10 17" stroke="#c8c8c8" stroke-width="1.2" fill="none"/><rect x="9" y="11" width="6" height="7" fill="none" stroke="#d0d0d0"/></svg>
<svg class="a" style="left:133px;top:709px" width="9" height="6" viewBox="0 0 9 6"><path d="M0.5 0.5 H8.5 L4.5 5 Z" fill="#c4c4c4"/></svg>
<svg class="a" style="left:145px;top:703px" width="19" height="19" viewBox="0 0 19 19"><path d="M2 3 V16 H6" stroke="#999" fill="none"/><rect x="3" y="7" width="3" height="3" fill="#f08a2a"/><rect x="3" y="12" width="3" height="3" fill="#f08a2a"/><path d="M10 1 V11 H7 L12 17 L17 11 H14 V1 Z" fill="#3a6ab0"/></svg>
<svg class="a" style="left:170px;top:703px" width="19" height="19" viewBox="0 0 19 19"><path d="M2 3 V16 H6" stroke="#999" fill="none"/><rect x="3" y="7" width="3" height="3" fill="#f08a2a"/><rect x="3" y="12" width="3" height="3" fill="#f08a2a"/><path d="M10 17 V7 H7 L12 1 L17 7 H14 V17 Z" fill="#3a6ab0"/></svg>
<svg class="a" style="left:195px;top:703px" width="19" height="19" viewBox="0 0 19 19"><rect x="1.5" y="1.5" width="12" height="12" fill="none" stroke="#555" stroke-width="1"/><rect x="11" y="12" width="7" height="5" rx="1" fill="#e03030"/><path d="M12.5 14.5 H16.5" stroke="#fff" stroke-width="1.2"/></svg>
<svg class="a" style="left:46px;top:732px" width="14" height="14" viewBox="0 0 14 14"><rect x="0.0" y="0.0" width="3.5" height="3.5" fill="#223a5a"/><rect x="3.5" y="0.0" width="3.5" height="3.5" fill="#8ab0d8"/><rect x="7.0" y="0.0" width="3.5" height="3.5" fill="#223a5a"/><rect x="10.5" y="0.0" width="3.5" height="3.5" fill="#5a80b0"/><rect x="0.0" y="3.5" width="3.5" height="3.5" fill="#8ab0d8"/><rect x="3.5" y="3.5" width="3.5" height="3.5" fill="#223a5a"/><rect x="7.0" y="3.5" width="3.5" height="3.5" fill="#8ab0d8"/><rect x="10.5" y="3.5" width="3.5" height="3.5" fill="#223a5a"/><rect x="0.0" y="7.0" width="3.5" height="3.5" fill="#223a5a"/><rect x="3.5" y="7.0" width="3.5" height="3.5" fill="#5a80b0"/><rect x="7.0" y="7.0" width="3.5" height="3.5" fill="#223a5a"/><rect x="10.5" y="7.0" width="3.5" height="3.5" fill="#8ab0d8"/><rect x="0.0" y="10.5" width="3.5" height="3.5" fill="#5a80b0"/><rect x="3.5" y="10.5" width="3.5" height="3.5" fill="#223a5a"/><rect x="7.0" y="10.5" width="3.5" height="3.5" fill="#8ab0d8"/><rect x="10.5" y="10.5" width="3.5" height="3.5" fill="#223a5a"/></svg>
<div style="position:absolute;left:0px;top:0px;width:1920px;height:1195px;background:rgba(0,0,0,0.30)"></div>
<div style="position:absolute;left:245px;top:23px;width:1431px;height:1154px;background:#efefef;box-shadow:0 3px 16px 1px rgba(0,0,0,0.42);border-radius:4px 4px 0 0"></div>
<div style="position:absolute;left:245px;top:23px;width:1431px;height:32px;background:#393939;border-radius:4px 4px 0 0"></div>
<div class="t" style="left:960px;top:31.30px;font-size:15px;line-height:15px;font-weight:400;color:#ffffff;transform:translateX(-50%)">Layereigenschaften — Heatmap — Symbolisierung</div>
<svg class="a" style="left:1655px;top:34px" width="10" height="10"><path d="M1 1 L9 9 M9 1 L1 9" stroke="#d4d4d4" stroke-width="1.8"/></svg>
<div style="position:absolute;left:245px;top:55px;width:150px;height:1122px;background:#5c5c5c"></div>
<div style="position:absolute;left:246px;top:55px;width:148px;height:26px;background:#fff;border-radius:3px"></div>
<svg class="a" style="left:253px;top:61px" width="16" height="16"><circle cx="6.5" cy="6.5" r="4.5" fill="none" stroke="#777" stroke-width="1.3"/><line x1="10" y1="10" x2="13.5" y2="13.5" stroke="#777" stroke-width="1.6"/></svg>
<div style="position:absolute;left:245px;top:160px;width:150px;height:36px;background:#efefef"></div>
<div class="t" style="left:282px;top:98.96px;font-size:15.4px;line-height:15.4px;font-weight:400;color:#fff;">Information</div>
<div class="t" style="left:282px;top:134.96px;font-size:15.4px;line-height:15.4px;font-weight:400;color:#fff;">Quelle</div>
<div class="t" style="left:285px;top:170.96px;font-size:15.4px;line-height:15.4px;font-weight:400;color:#000;">Symbolisierung</div>
<div class="t" style="left:282px;top:206.96px;font-size:15.4px;line-height:15.4px;font-weight:400;color:#fff;">Transparenz</div>
<div class="t" style="left:282px;top:242.96px;font-size:15.4px;line-height:15.4px;font-weight:400;color:#fff;">Histogramm</div>
<div class="t" style="left:282px;top:278.96px;font-size:15.4px;line-height:15.4px;font-weight:400;color:#fff;">Darstellung</div>
<div class="t" style="left:282px;top:314.96px;font-size:15.4px;line-height:15.4px;font-weight:400;color:#fff;">Zeitlich</div>
<div class="t" style="left:282px;top:350.96px;font-size:15.4px;line-height:15.4px;font-weight:400;color:#fff;">Pyramiden</div>
<div class="t" style="left:282px;top:386.96px;font-size:15.4px;line-height:15.4px;font-weight:400;color:#fff;">Metadaten</div>
<div class="t" style="left:282px;top:422.96px;font-size:15.4px;line-height:15.4px;font-weight:400;color:#fff;">Legende</div>
<div class="t" style="left:282px;top:458.96px;font-size:15.4px;line-height:15.4px;font-weight:400;color:#fff;">QGIS Server</div>
<div class="a" style="left:402px;top:66px;width:0;height:0;border-top:7px solid #2e2e2e;border-left:5.0px solid transparent;border-right:5.0px solid transparent"></div>
<div class="t" style="left:421.5px;top:61.91px;font-size:14.4px;line-height:14.4px;font-weight:700;color:#000;">Kanaldarstellung</div>
<div style="position:absolute;left:400px;top:81px;width:1273px;height:630px;background:#ebebeb;border:1px solid #d6d6d6;border-radius:3px"></div>
<div class="t" style="left:411.5px;top:98.03px;font-size:15.2px;line-height:15.2px;font-weight:400;color:#000;">Darstellungsart</div>
<div style="position:absolute;left:522px;top:92px;width:214px;height:27px;background:linear-gradient(#fdfdfd,#ededed);border:1px solid #b9b9b9;border-radius:3px"></div>
<div class="t" style="left:527.5px;top:98.20px;font-size:15px;line-height:15px;font-weight:400;color:#000;">Einkanalpseudofarbe</div>
<div class="a" style="left:721px;top:103.5px;width:0;height:0;border-top:4px solid #444;border-left:4.0px solid transparent;border-right:4.0px solid transparent"></div>
<div class="t" style="left:414.7px;top:134.30px;font-size:15px;line-height:15px;font-weight:400;color:#000;">Kanal</div>
<div style="position:absolute;left:727px;top:128px;width:930px;height:27px;background:linear-gradient(#fdfdfd,#ededed);border:1px solid #b9b9b9;border-radius:3px"></div>
<div class="t" style="left:732px;top:134.50px;font-size:15px;line-height:15px;font-weight:400;color:#000;">Kanal 1 (Gray)</div>
<div class="a" style="left:1642px;top:139.5px;width:0;height:0;border-top:4px solid #444;border-left:4.0px solid transparent;border-right:4.0px solid transparent"></div>
<div class="t" style="left:414.7px;top:167.00px;font-size:15px;line-height:15px;font-weight:400;color:#000;">Min</div>
<div style="position:absolute;left:727px;top:162px;width:306px;height:26px;background:#fff;border:1px solid #b9b9b9;border-radius:3px"></div>
<div class="t" style="left:730.3px;top:166.90px;font-size:15px;line-height:15px;font-weight:400;color:#000;">5.90839e-08</div>
<div class="t" style="left:1039.7px;top:166.90px;font-size:15px;line-height:15px;font-weight:400;color:#000;">Max</div>
<div style="position:absolute;left:1352px;top:162px;width:305px;height:26px;background:#fff;border:1px solid #b9b9b9;border-radius:3px"></div>
<div class="t" style="left:1355.4px;top:166.90px;font-size:15px;line-height:15px;font-weight:400;color:#000;">592.595</div>
<div class="a" style="left:419px;top:199.5px;width:0;height:0;border-left:7px solid #2e2e2e;border-top:5.5px solid transparent;border-bottom:5.5px solid transparent"></div>
<div class="t" style="left:436.6px;top:197.10px;font-size:15px;line-height:15px;font-weight:700;color:#000;">Min/Max-Werteinstellungen</div>
<div class="t" style="left:417px;top:233.80px;font-size:15px;line-height:15px;font-weight:400;color:#000;">Interpolation</div>
<div style="position:absolute;left:834px;top:228px;width:821px;height:27px;background:linear-gradient(#fdfdfd,#ededed);border:1px solid #b9b9b9;border-radius:3px"></div>
<div class="t" style="left:838.8px;top:233.80px;font-size:15px;line-height:15px;font-weight:400;color:#000;">Linear</div>
<div class="a" style="left:1640px;top:239.5px;width:0;height:0;border-top:4px solid #444;border-left:4.0px solid transparent;border-right:4.0px solid transparent"></div>
<div class="t" style="left:417px;top:267.80px;font-size:15px;line-height:15px;font-weight:400;color:#000;">Farbverlauf</div>
<div style="position:absolute;left:834px;top:261px;width:809px;height:27px;background:linear-gradient(#fdfdfd,#ededed);border:1px solid #b9b9b9;border-radius:3px"></div>
<div style="position:absolute;left:839px;top:267px;width:799px;height:16px;background:linear-gradient(to right,#fff5f0,#fee0d2 12.5%,#fcbba1 25%,#fc9272 37.5%,#fb6a4a 50%,#ef3b2c 62.5%,#cb181d 75%,#a50f15 87.5%,#67000d)"></div>
<div style="position:absolute;left:1644px;top:261px;width:11px;height:27px;background:linear-gradient(#fdfdfd,#ededed);border:1px solid #b9b9b9;border-radius:3px"></div>
<div class="a" style="left:1645.5px;top:273px;width:0;height:0;border-top:4px solid #444;border-left:3.5px solid transparent;border-right:3.5px solid transparent"></div>
<div class="t" style="left:417px;top:301.13px;font-size:15.2px;line-height:15.2px;font-weight:400;color:#000;">Beschriftungseinheitssuffix</div>
<div style="position:absolute;left:834px;top:296px;width:821px;height:26px;background:#fff;border:1px solid #b9b9b9;border-radius:3px"></div>
<div style="position:absolute;left:417px;top:328px;width:1238px;height:266px;background:#fff;border:1px solid #b0b0b0"></div>
<div style="position:absolute;left:418px;top:329px;width:1223px;height:22px;background:linear-gradient(#f8f8f8,#ebebeb);border-bottom:1px solid #b0b0b0"></div>
<div style="position:absolute;left:517px;top:329px;width:1px;height:22px;background:#cfcfcf"></div>
<div style="position:absolute;left:576px;top:329px;width:1px;height:22px;background:#cfcfcf"></div>
<div class="t" style="left:420px;top:333.10px;font-size:15px;line-height:15px;font-weight:400;color:#000;">Wert</div>
<div class="t" style="left:520.3px;top:333.10px;font-size:15px;line-height:15px;font-weight:400;color:#000;">Farbe</div>
<div class="t" style="left:579.7px;top:333.10px;font-size:15px;line-height:15px;font-weight:400;color:#000;">Beschriftung</div>
<div style="position:absolute;left:1640px;top:329px;width:14px;height:264px;background:linear-gradient(to right,#f4f4f4,#fcfcfc);border-left:1px solid #c8c8c8"></div>
<div style="position:absolute;left:1641px;top:342px;width:13px;height:1px;background:#cfcfcf"></div>
<div class="a" style="left:1643px;top:333px;width:0;height:0;border-bottom:5px solid #444;border-left:4.5px solid transparent;border-right:4.5px solid transparent"></div>
<div style="position:absolute;left:1641px;top:501px;width:13px;height:79px;background:#d9d9d9"></div>
<div style="position:absolute;left:1641px;top:580px;width:13px;height:1px;background:#cfcfcf"></div>
<div class="a" style="left:1643px;top:584px;width:0;height:0;border-top:5px solid #444;border-left:4.5px solid transparent;border-right:4.5px solid transparent"></div>
<div class="t" style="left:440.5px;top:364.00px;font-size:15px;line-height:15px;font-weight:400;color:#000;">5.90839…</div>
<div style="position:absolute;left:529px;top:353px;width:36px;height:35px;background:#fff5f0;border-radius:6px"></div>
<div class="t" style="left:580px;top:364.00px;font-size:15px;line-height:15px;font-weight:400;color:#9a9a9a;">5.90839e-08</div>
<div class="t" style="left:440.5px;top:402.00px;font-size:15px;line-height:15px;font-weight:400;color:#000;">77.0373…</div>
<div style="position:absolute;left:529px;top:391px;width:36px;height:35px;background:#fee0d2;border-radius:6px"></div>
<div class="t" style="left:580px;top:402.00px;font-size:15px;line-height:15px;font-weight:400;color:#9a9a9a;">77.037350051403</div>
<div class="t" style="left:440.5px;top:440.00px;font-size:15px;line-height:15px;font-weight:400;color:#000;">154.074…</div>
<div style="position:absolute;left:529px;top:429px;width:36px;height:35px;background:#fcbba1;border-radius:6px"></div>
<div class="t" style="left:580px;top:440.00px;font-size:15px;line-height:15px;font-weight:400;color:#9a9a9a;">154.074700043722</div>
<div class="t" style="left:440.5px;top:478.00px;font-size:15px;line-height:15px;font-weight:400;color:#000;letter-spacing:-0.75px">231.1120…</div>
<div style="position:absolute;left:529px;top:467px;width:36px;height:35px;background:#fc9272;border-radius:6px"></div>
<div class="t" style="left:580px;top:478.00px;font-size:15px;line-height:15px;font-weight:400;color:#9a9a9a;">231.112050036041</div>
<div class="t" style="left:440.5px;top:516.00px;font-size:15px;line-height:15px;font-weight:400;color:#000;">308.149…</div>
<div style="position:absolute;left:529px;top:505px;width:36px;height:35px;background:#fb6a4a;border-radius:6px"></div>
<div class="t" style="left:580px;top:516.00px;font-size:15px;line-height:15px;font-weight:400;color:#9a9a9a;">308.14940002836</div>
<div class="t" style="left:440.5px;top:554.00px;font-size:15px;line-height:15px;font-weight:400;color:#000;">385.186…</div>
<div style="position:absolute;left:529px;top:543px;width:36px;height:35px;background:#ef3b2c;border-radius:6px"></div>
<div class="t" style="left:580px;top:554.00px;font-size:15px;line-height:15px;font-weight:400;color:#9a9a9a;">385.186750020679</div>
<div style="position:absolute;left:529px;top:581px;width:36px;height:13px;background:#cb181d;border-radius:6px 6px 0 0"></div>
<div class="t" style="left:417.5px;top:606.70px;font-size:15px;line-height:15px;font-weight:400;color:#000;">Modus</div>
<div style="position:absolute;left:469px;top:601px;width:147px;height:27px;background:linear-gradient(#fdfdfd,#ededed);border:1px solid #b9b9b9;border-radius:3px"></div>
<div class="t" style="left:474.5px;top:606.70px;font-size:15px;line-height:15px;font-weight:400;color:#000;">Fortlaufend</div>
<div class="a" style="left:601px;top:612.5px;width:0;height:0;border-top:4px solid #444;border-left:4.0px solid transparent;border-right:4.0px solid transparent"></div>
<div class="t" style="left:1545.7px;top:606.50px;font-size:15px;line-height:15px;font-weight:400;color:#000;">Klassen</div>
<div style="position:absolute;left:1603px;top:602px;width:52px;height:25px;background:#f2f2f2;border:1px solid #b9b9b9;border-radius:3px"></div>
<div class="t" style="left:1609px;top:606.50px;font-size:15px;line-height:15px;font-weight:400;color:#a8a8a8;">5</div>
<div style="position:absolute;left:1640px;top:602px;width:1px;height:25px;background:#d0d0d0"></div>
<div class="a" style="left:1644px;top:607px;width:0;height:0;border-bottom:4px solid #c4c4c4;border-left:4.0px solid transparent;border-right:4.0px solid transparent"></div>
<div class="a" style="left:1644px;top:617px;width:0;height:0;border-top:4px solid #c4c4c4;border-left:4.0px solid transparent;border-right:4.0px solid transparent"></div>
<div style="position:absolute;left:417px;top:634px;width:96px;height:27px;background:linear-gradient(#f3f8fc,#dde8f2);border:1px solid #3c78aa;border-radius:3px"></div>
<div class="t" style="left:421.4px;top:640.30px;font-size:15px;line-height:15px;font-weight:400;color:#000;">Klassifizieren</div>
<div style="position:absolute;left:519px;top:636px;width:28px;height:24px;background:linear-gradient(#fbfbfb,#ececec);border:1px solid #b9b9b9;border-radius:3px"></div>
<div style="position:absolute;left:553px;top:636px;width:28px;height:24px;background:linear-gradient(#fbfbfb,#ececec);border:1px solid #b9b9b9;border-radius:3px"></div>
<div style="position:absolute;left:587px;top:636px;width:28px;height:24px;background:linear-gradient(#fbfbfb,#ececec);border:1px solid #b9b9b9;border-radius:3px"></div>
<div style="position:absolute;left:621px;top:636px;width:28px;height:24px;background:linear-gradient(#fbfbfb,#ececec);border:1px solid #b9b9b9;border-radius:3px"></div>
<div style="position:absolute;left:655px;top:636px;width:28px;height:24px;background:linear-gradient(#fbfbfb,#ececec);border:1px solid #b9b9b9;border-radius:3px"></div>
<div style="position:absolute;left:417px;top:673px;width:14px;height:14px;background:#fff;border:1px solid #b0b0b0;border-radius:2px"></div>
<div class="t" style="left:436.3px;top:672.43px;font-size:14.85px;line-height:14.85px;font-weight:400;color:#000;">Werte auf Bereich beschränken</div>
<div class="a" style="left:402px;top:725px;width:0;height:0;border-top:7px solid #2e2e2e;border-left:5.0px solid transparent;border-right:5.0px solid transparent"></div>
<div class="t" style="left:421.5px;top:720.81px;font-size:14.4px;line-height:14.4px;font-weight:700;color:#000;">Farbdarstellung</div>
<div style="position:absolute;left:400px;top:740px;width:1273px;height:149px;background:#ebebeb;border:1px solid #d6d6d6;border-radius:3px"></div>
<div class="t" style="left:411.2px;top:757.90px;font-size:15px;line-height:15px;font-weight:400;color:#000;">Mischmodus</div>
<div style="position:absolute;left:502px;top:752px;width:507px;height:26px;background:linear-gradient(#fdfdfd,#ededed);border:1px solid #b9b9b9;border-radius:3px"></div>
<div class="t" style="left:507.5px;top:757.90px;font-size:15px;line-height:15px;font-weight:400;color:#000;">Normal</div>
<div class="a" style="left:994px;top:763.0px;width:0;height:0;border-top:4px solid #444;border-left:4.0px solid transparent;border-right:4.0px solid transparent"></div>
<div style="position:absolute;left:1537px;top:751px;width:124px;height:26px;background:linear-gradient(#fbfbfb,#ececec);border:1px solid #b9b9b9;border-radius:3px"></div>
<div class="t" style="left:1558px;top:757.80px;font-size:15px;line-height:15px;font-weight:400;color:#000;">Zurücksetzen</div>
<div class="t" style="left:411.2px;top:789.90px;font-size:15px;line-height:15px;font-weight:400;color:#000;">Helligkeit</div>
<div style="position:absolute;left:503px;top:795px;width:433px;height:5px;background:linear-gradient(#c8c8c8,#e8e8e8);border:1px solid #b4b4b4;border-radius:3px"></div>
<div style="position:absolute;left:503px;top:795px;width:216px;height:5px;background:linear-gradient(#5aa6e0,#2d86cf);border:1px solid #2a6fa8;border-radius:3px"></div>
<div style="position:absolute;left:713px;top:791px;width:13px;height:13px;background:linear-gradient(#ffffff,#e6e6e6);border:1px solid #a8a8a8;border-radius:3px"></div>
<div style="position:absolute;left:943px;top:785px;width:58px;height:24px;background:#fff;border:1px solid #b9b9b9;border-radius:3px"></div>
<div class="t" style="left:948px;top:789.80px;font-size:15px;line-height:15px;font-weight:400;color:#000;">0</div>
<div style="position:absolute;left:987px;top:786px;width:1px;height:22px;background:#d0d0d0"></div>
<div class="a" style="left:990px;top:790px;width:0;height:0;border-bottom:4px solid #444;border-left:4.0px solid transparent;border-right:4.0px solid transparent"></div>
<div class="a" style="left:990px;top:800px;width:0;height:0;border-top:4px solid #444;border-left:4.0px solid transparent;border-right:4.0px solid transparent"></div>
<div style="position:absolute;left:1007px;top:785px;width:1px;height:27px;background:#c8c8c8"></div>
<div class="t" style="left:1016.6px;top:790.30px;font-size:15px;line-height:15px;font-weight:400;color:#000;">Kontrast</div>
<div style="position:absolute;left:1098px;top:795px;width:432px;height:5px;background:linear-gradient(#c8c8c8,#e8e8e8);border:1px solid #b4b4b4;border-radius:3px"></div>
<div style="position:absolute;left:1098px;top:795px;width:216px;height:5px;background:linear-gradient(#5aa6e0,#2d86cf);border:1px solid #2a6fa8;border-radius:3px"></div>
<div style="position:absolute;left:1308px;top:791px;width:13px;height:13px;background:linear-gradient(#ffffff,#e6e6e6);border:1px solid #a8a8a8;border-radius:3px"></div>
<div style="position:absolute;left:1537px;top:785px;width:124px;height:24px;background:#fff;border:1px solid #b9b9b9;border-radius:3px"></div>
<div class="t" style="left:1542px;top:789.80px;font-size:15px;line-height:15px;font-weight:400;color:#000;">0</div>
<div style="position:absolute;left:1647px;top:786px;width:1px;height:22px;background:#d0d0d0"></div>
<div class="a" style="left:1650px;top:790px;width:0;height:0;border-bottom:4px solid #444;border-left:4.0px solid transparent;border-right:4.0px solid transparent"></div>
<div class="a" style="left:1650px;top:800px;width:0;height:0;border-top:4px solid #444;border-left:4.0px solid transparent;border-right:4.0px solid transparent"></div>
<div class="t" style="left:411.2px;top:822.70px;font-size:15px;line-height:15px;font-weight:400;color:#000;">Sättigung</div>
<div style="position:absolute;left:503px;top:828px;width:433px;height:5px;background:linear-gradient(#c8c8c8,#e8e8e8);border:1px solid #b4b4b4;border-radius:3px"></div>
<div style="position:absolute;left:503px;top:828px;width:216px;height:5px;background:linear-gradient(#5aa6e0,#2d86cf);border:1px solid #2a6fa8;border-radius:3px"></div>
<div style="position:absolute;left:713px;top:824px;width:13px;height:13px;background:linear-gradient(#ffffff,#e6e6e6);border:1px solid #a8a8a8;border-radius:3px"></div>
<div style="position:absolute;left:943px;top:819px;width:58px;height:24px;background:#fff;border:1px solid #b9b9b9;border-radius:3px"></div>
<div class="t" style="left:948px;top:823.80px;font-size:15px;line-height:15px;font-weight:400;color:#000;">0</div>
<div style="position:absolute;left:987px;top:820px;width:1px;height:22px;background:#d0d0d0"></div>
<div class="a" style="left:990px;top:824px;width:0;height:0;border-bottom:4px solid #444;border-left:4.0px solid transparent;border-right:4.0px solid transparent"></div>
<div class="a" style="left:990px;top:834px;width:0;height:0;border-top:4px solid #444;border-left:4.0px solid transparent;border-right:4.0px solid transparent"></div>
<div style="position:absolute;left:1007px;top:818px;width:1px;height:27px;background:#c8c8c8"></div>
<div class="t" style="left:1016.6px;top:823.00px;font-size:15px;line-height:15px;font-weight:400;color:#000;">Graustufen</div>
<div style="position:absolute;left:1097px;top:818px;width:564px;height:26px;background:linear-gradient(#fdfdfd,#ededed);border:1px solid #b9b9b9;border-radius:3px"></div>
<div class="t" style="left:1101.9px;top:823.20px;font-size:15px;line-height:15px;font-weight:400;color:#000;">Aus</div>
<div class="a" style="left:1646px;top:829.0px;width:0;height:0;border-top:4px solid #444;border-left:4.0px solid transparent;border-right:4.0px solid transparent"></div>
<div class="t" style="left:411.2px;top:856.80px;font-size:15px;line-height:15px;font-weight:400;color:#000;">Farbton</div>
<div style="position:absolute;left:502px;top:856px;width:14px;height:14px;background:#fff;border:1px solid #b0b0b0;border-radius:2px"></div>
<div class="t" style="left:521.5px;top:856.10px;font-size:15px;line-height:15px;font-weight:400;color:#000;">Einfärben</div>
<div style="position:absolute;left:598px;top:850px;width:88px;height:28px;background:linear-gradient(#fbfbfb,#ececec);border:1px solid #c8c8c8;border-radius:3px"></div>
<div style="position:absolute;left:603px;top:856px;width:78px;height:16px;background:#e8dfdf;border-radius:3px"></div>
<div style="position:absolute;left:686px;top:850px;width:12px;height:28px;background:linear-gradient(#fbfbfb,#ececec);border:1px solid #c8c8c8;border-radius:3px"></div>
<div class="a" style="left:688px;top:862px;width:0;height:0;border-top:3px solid #c0c0c0;border-left:3.5px solid transparent;border-right:3.5px solid transparent"></div>
<div class="t" style="left:704px;top:856.10px;font-size:15px;line-height:15px;font-weight:400;color:#000;">Stärke</div>
<div style="position:absolute;left:754px;top:862px;width:832px;height:4px;background:linear-gradient(#9a9a9a,#c8c8c8);border:1px solid #8c8c8c;border-radius:2px"></div>
<div style="position:absolute;left:1574px;top:858px;width:13px;height:13px;background:linear-gradient(#ffffff,#e6e6e6);border:1px solid #a8a8a8;border-radius:3px"></div>
<div style="position:absolute;left:1594px;top:852px;width:67px;height:24px;background:#f2f2f2;border:1px solid #b9b9b9;border-radius:3px"></div>
<div class="t" style="left:1599px;top:856.80px;font-size:15px;line-height:15px;font-weight:400;color:#b0b0b0;">100%</div>
<div style="position:absolute;left:1647px;top:853px;width:1px;height:22px;background:#d0d0d0"></div>
<div class="a" style="left:1650px;top:857px;width:0;height:0;border-bottom:4px solid #c4c4c4;border-left:4.0px solid transparent;border-right:4.0px solid transparent"></div>
<div class="a" style="left:1650px;top:867px;width:0;height:0;border-top:4px solid #c4c4c4;border-left:4.0px solid transparent;border-right:4.0px solid transparent"></div>
<div class="a" style="left:402px;top:904px;width:0;height:0;border-top:7px solid #2e2e2e;border-left:5.0px solid transparent;border-right:5.0px solid transparent"></div>
<div class="t" style="left:421px;top:899.81px;font-size:14.4px;line-height:14.4px;font-weight:700;color:#000;">Abtastung</div>
<div style="position:absolute;left:400px;top:919px;width:1273px;height:49px;background:#ebebeb;border:1px solid #d6d6d6;border-radius:3px"></div>
<div class="t" style="left:411.4px;top:936.00px;font-size:15px;line-height:15px;font-weight:400;color:#000;">Gezoomt: hinein</div>
<div style="position:absolute;left:527px;top:930px;width:151px;height:27px;background:linear-gradient(#fdfdfd,#ededed);border:1px solid #b9b9b9;border-radius:3px"></div>
<div class="t" style="left:532.4px;top:936.00px;font-size:15px;line-height:15px;font-weight:400;color:#000;">Nächster Nachbar</div>
<div class="a" style="left:663px;top:941.5px;width:0;height:0;border-top:4px solid #444;border-left:4.0px solid transparent;border-right:4.0px solid transparent"></div>
<div class="t" style="left:684.6px;top:936.00px;font-size:15px;line-height:15px;font-weight:400;color:#000;">hinaus</div>
<div style="position:absolute;left:734px;top:930px;width:151px;height:27px;background:linear-gradient(#fdfdfd,#ededed);border:1px solid #b9b9b9;border-radius:3px"></div>
<div class="t" style="left:739.6px;top:936.00px;font-size:15px;line-height:15px;font-weight:400;color:#000;">Nächster Nachbar</div>
<div class="a" style="left:870px;top:941.5px;width:0;height:0;border-top:4px solid #444;border-left:4.0px solid transparent;border-right:4.0px solid transparent"></div>
<div class="t" style="left:891px;top:936.00px;font-size:15px;line-height:15px;font-weight:400;color:#000;">Überabtastung</div>
<div style="position:absolute;left:997px;top:931px;width:66px;height:25px;background:#fff;border:1px solid #b9b9b9;border-radius:3px"></div>
<div class="t" style="left:1002px;top:936.30px;font-size:15px;line-height:15px;font-weight:400;color:#000;">2,00</div>
<div style="position:absolute;left:1049px;top:932px;width:1px;height:23px;background:#d0d0d0"></div>
<div class="a" style="left:1052px;top:936px;width:0;height:0;border-bottom:4px solid #444;border-left:4.0px solid transparent;border-right:4.0px solid transparent"></div>
<div class="a" style="left:1052px;top:947px;width:0;height:0;border-top:4px solid #444;border-left:4.0px solid transparent;border-right:4.0px solid transparent"></div>
<div class="t" style="left:820.3px;top:980.51px;font-size:14.4px;line-height:14.4px;font-weight:700;color:#000;">Thumbnail</div>
<div class="t" style="left:968.8px;top:980.51px;font-size:14.4px;line-height:14.4px;font-weight:700;color:#000;">Legende</div>
<div class="t" style="left:1118.7px;top:979.51px;font-size:14.4px;line-height:14.4px;font-weight:700;color:#000;">Palette</div>
<div style="position:absolute;left:815px;top:998px;width:143px;height:143px;background:#eaeaea;border:1px solid #d8d8d8;border-radius:3px"></div>
<div style="position:absolute;left:965px;top:998px;width:143px;height:143px;background:#eaeaea;border:1px solid #d8d8d8;border-radius:3px"></div>
<div style="position:absolute;left:1115px;top:998px;width:143px;height:143px;background:#eaeaea;border:1px solid #d8d8d8;border-radius:3px"></div>
<div style="position:absolute;left:826px;top:1009px;width:120px;height:120px;background:#fff;border:1px solid #c8c8c8"></div>
<div style="position:absolute;left:976px;top:1009px;width:120px;height:120px;background:#ececec;border:1px solid #000"></div>
<div style="position:absolute;left:1126px;top:1009px;width:120px;height:120px;background:#ececec;border:1px solid #000"></div>
<div style="position:absolute;left:400px;top:1148px;width:79px;height:25px;background:linear-gradient(#fbfbfb,#ececec);border:1px solid #b9b9b9;border-radius:3px"></div>
<div class="t" style="left:431.5px;top:1152.80px;font-size:15px;line-height:15px;font-weight:400;color:#000;">Help</div>
<div style="position:absolute;left:485px;top:1148px;width:80px;height:25px;background:linear-gradient(#fbfbfb,#ececec);border:1px solid #b9b9b9;border-radius:3px"></div>
<div class="t" style="left:507.9px;top:1152.80px;font-size:15px;line-height:15px;font-weight:400;color:#000;">Stil</div>
<div class="a" style="left:554px;top:1158.5px;width:0;height:0;border-top:3px solid #555;border-left:3.0px solid transparent;border-right:3.0px solid transparent"></div>
<div style="position:absolute;left:1421px;top:1147px;width:80px;height:27px;background:linear-gradient(#fbfbfb,#ececec);border:1px solid #b9b9b9;border-radius:3px"></div>
<div class="t" style="left:1449.5px;top:1152.80px;font-size:15px;line-height:15px;font-weight:400;color:#000;">Apply</div>
<div style="position:absolute;left:1507px;top:1147px;width:80px;height:27px;background:linear-gradient(#fbfbfb,#ececec);border:1px solid #b9b9b9;border-radius:3px"></div>
<div class="t" style="left:1532.3px;top:1152.80px;font-size:15px;line-height:15px;font-weight:400;color:#000;"><u>C</u>ancel</div>
<div style="position:absolute;left:1593px;top:1147px;width:80px;height:27px;background:linear-gradient(#fbfbfb,#ececec);border:1px solid #b9b9b9;border-radius:3px"></div>
<div class="t" style="left:1630px;top:1152.80px;font-size:15px;line-height:15px;font-weight:400;color:#000;"><u>O</u>K</div>
<svg class="a" style="left:250px;top:93px" width="25" height="25" viewBox="0 0 25 25"><defs><radialGradient id="ig" cx="40%" cy="30%" r="70%"><stop offset="0" stop-color="#8ab8e8"/><stop offset="1" stop-color="#4a84c4"/></radialGradient></defs><circle cx="12.5" cy="12.5" r="12" fill="url(#ig)"/><circle cx="14" cy="6.5" r="2" fill="#fff"/><path d="M9 11 L14.5 10.5 L12 19 L14 19 L13.5 20.5 L8 20.5 L10.5 12.5 L8.7 12.5 Z" fill="#fff"/></svg>
<svg class="a" style="left:250px;top:130px" width="25" height="26" viewBox="0 0 25 26"><g transform="translate(14.5 14.5)"><circle r="8.8" fill="none" stroke="#e4e4e4" stroke-width="3.2" stroke-dasharray="3.2 1.6"/><circle r="7" fill="#e8e8e8"/><circle r="5" fill="#5a8ed8"/></g><path d="M2.2 2.5 Q0.5 7 4.5 8.5 Q7 9 8.5 7.5 L12 11" stroke="#f2f2f2" stroke-width="3.4" fill="none" stroke-linecap="round"/><path d="M3 1.5 Q6 0.5 8 3" stroke="#f2f2f2" stroke-width="2.2" fill="none"/><path d="M10.5 9.5 L22 21" stroke="#1a1a1a" stroke-width="6.2" stroke-linecap="round"/><path d="M10.5 9.5 L22 21" stroke="#e8d070" stroke-width="4.2" stroke-linecap="round"/><circle cx="21" cy="20" r="1.1" fill="#222"/></svg>
<svg class="a" style="left:252px;top:167px" width="26" height="23" viewBox="0 0 26 23"><path d="M4 8 L7 2 L18 5 L16 10 Z" fill="#b4d27a"/><path d="M2.5 12.5 L4.5 7 L16 10 L14 15 Z" fill="#5c9ee0"/><path d="M0.5 18 L2.5 11.5 L14 15 L12 21.5 Z" fill="#d04a5c"/><path d="M7.5 14 L14 8 L20.5 14.5 L14 20.5 Z" fill="#b3a77c" stroke="#8a7a50" stroke-width="0.8"/><path d="M9.5 14 L14 10 M11 16 L16 11.5 M12.5 17.8 L18 13" stroke="#8f8460" stroke-width="0.6"/><path d="M17 11 L24.5 2.5" stroke="#a89460" stroke-width="2.6" stroke-linecap="round"/></svg>
<svg class="a" style="left:249px;top:203px" width="26" height="25" viewBox="0 0 26 25"><defs><linearGradient id="tg" x1="0" y1="0" x2="1" y2="0.6"><stop offset="0" stop-color="#2f5ea8"/><stop offset="0.55" stop-color="#9ab0d0"/><stop offset="1" stop-color="#eef0f4"/></linearGradient></defs><rect x="3" y="1.5" width="22" height="17" fill="url(#tg)" stroke="#e8e8e8" stroke-width="0.8"/><path d="M8 6 Q10 4 12 6 L11 9 Q9 10 8 8Z M13 5 Q17 4 20 6 L19 10 Q16 9 14 11 Q13 8 13 5Z M15 12 Q17 12 17 15 L15 16Z M21 13 L23 15 L21 16Z" fill="#b8c4d8" opacity="0.7"/><rect x="1" y="1" width="3.5" height="19" fill="#f4f4f4" rx="1"/><rect x="1" y="20" width="24" height="4" fill="#f0f0f0"/><rect x="2" y="21" width="22" height="1.6" fill="#2a2a2a"/><path d="M5 21.8 H24" stroke="#888" stroke-width="1" stroke-dasharray="1 1.2"/><rect x="3" y="19.5" width="2.2" height="4.5" fill="#2a62b0"/></svg>
<svg class="a" style="left:249px;top:239px" width="26" height="20" viewBox="0 0 26 20"><rect x="3" y="2" width="21" height="17" fill="#f2f2f2" rx="1"/><rect x="1" y="1" width="4" height="18" fill="#f6f6f6" rx="1"/><path d="M5 3 V16 H23" stroke="#999" stroke-width="1.2" fill="none"/><path d="M5 12 L9 6 L14 11 L18 7 L22 11" stroke="#2a5aa8" stroke-width="1.1" fill="none"/></svg>
<svg class="a" style="left:250px;top:273px" width="25" height="25" viewBox="0 0 25 25"><path d="M13 12 L22 3" stroke="#d8962e" stroke-width="3.4" stroke-linecap="round"/><path d="M1 16 L8 9 L16 17 L9 24 Z" fill="#e0a450" stroke="#b8782a" stroke-width="0.8"/><path d="M8 9 L16 17 L17 15 L10 8 Z" fill="#c07a28"/></svg>
<svg class="a" style="left:249px;top:309px" width="26" height="26" viewBox="0 0 26 26"><circle cx="13" cy="13" r="12" fill="#efefef" stroke="#ccc" stroke-width="0.8"/><g fill="#3a6ec0"><circle cx="13" cy="3" r="0.9"/><circle cx="13" cy="23" r="0.9"/><circle cx="3" cy="13" r="0.9"/><circle cx="23" cy="13" r="0.9"/><circle cx="18" cy="4.3" r="0.8"/><circle cx="21.7" cy="8" r="0.8"/><circle cx="21.7" cy="18" r="0.8"/><circle cx="18" cy="21.7" r="0.8"/><circle cx="8" cy="21.7" r="0.8"/><circle cx="4.3" cy="18" r="0.8"/><circle cx="4.3" cy="8" r="0.8"/><circle cx="8" cy="4.3" r="0.8"/></g><path d="M13 3.5 V14 L18 18" stroke="#888" stroke-width="1.8" fill="none"/></svg>
<svg class="a" style="left:249px;top:348px" width="26" height="20" viewBox="0 0 26 20"><path d="M1 18 L6 5 Q13 -1 20 5 L25 18 Z" fill="#e6e6e6" stroke="#cfcfcf" stroke-width="0.8"/><path d="M6 9 L9 12 L13 8 L17 12 L20 9 M9 15 L13 12 L17 15" stroke="#bbb" stroke-width="0.8" fill="none"/></svg>
<svg class="a" style="left:251px;top:381px" width="25" height="25" viewBox="0 0 25 25"><path d="M2 2 H14 L18 6 V24 H2 Z" fill="#fafafa" stroke="#d8d8d8" stroke-width="0.8"/><path d="M4 9 H14 M4 12 H14 M4 15 H12 M4 18 H14 M4 21 H14" stroke="#9a9a9a" stroke-width="0.9"/><path d="M13 17 L22 4" stroke="#e07020" stroke-width="2.6"/><path d="M12 18.5 L13 16 L14.6 17.2 Z" fill="#444"/></svg>
<svg class="a" style="left:250px;top:418px" width="22" height="22" viewBox="0 0 22 22"><rect x="1" y="1" width="6" height="5.5" fill="#ffd000" stroke="#c08000" stroke-width="0.6"/><rect x="1" y="8" width="6" height="5.5" fill="#ff4a10" stroke="#b02000" stroke-width="0.6"/><rect x="1" y="15" width="6" height="5.5" fill="#10c050" stroke="#087a30" stroke-width="0.6"/><path d="M8 4.5 H15 M8 11.5 H17.5 M8 18.5 H14" stroke="#c8c8c8" stroke-width="1.6"/></svg>
<svg class="a" style="left:249px;top:455px" width="26" height="23" viewBox="0 0 26 23"><rect x="3" y="2" width="21" height="18" fill="#f4f4f4" stroke="#d0d0d0" stroke-width="0.8"/><rect x="1" y="1" width="4" height="21" fill="#f8f8f8" rx="1" stroke="#d0d0d0" stroke-width="0.6"/><path d="M5 18 V9 Q9 6 11 9 Q13 11 16 7 Q19 5 22 7 V14 Q19 17 16 16 Q12 13 10 17 Z" fill="#5a8ed0"/><path d="M17 19 L23 14" stroke="#888" stroke-width="0.8"/></svg>
<svg class="a" style="left:525px;top:640px" width="16" height="16" viewBox="0 0 16 16"><path d="M5.5 1 H10.5 V5.5 H15 V10.5 H10.5 V15 H5.5 V10.5 H1 V5.5 H5.5 Z" fill="#fff" stroke="#3a7a3a" stroke-width="1.1"/><path d="M8 3.5 V12.5 M3.5 8 H12.5" stroke="#3a7a3a" stroke-width="1.5"/></svg>
<svg class="a" style="left:559px;top:644px" width="16" height="8" viewBox="0 0 16 8"><rect x="1" y="1" width="14" height="6" fill="#fff" stroke="#e03a3a" stroke-width="1.2"/><rect x="3" y="3.2" width="10" height="1.8" fill="#e03a3a"/></svg>
<svg class="a" style="left:592px;top:639px" width="18" height="18" viewBox="0 0 18 18"><path d="M10 1 L4.5 6.5 L10 11 V8 Q14.5 8 13.5 12.5 Q17.5 6 10 4.3 Z" fill="#7ab87a"/><path d="M8 17 L13.5 11.5 L8 7 V10 Q3.5 10 4.5 5.5 Q0.5 12 8 13.7 Z" fill="#7ab87a"/></svg>
<svg class="a" style="left:627px;top:642px" width="16" height="13" viewBox="0 0 16 13"><path d="M1 1 H6 L7.5 2.5 H14 V12 H1 Z" fill="#f0c840" stroke="#c8a020" stroke-width="0.6"/><path d="M1 12 L3 5 H15.5 L13.5 12 Z" fill="#ffd84a" stroke="#c8a020" stroke-width="0.6"/></svg>
<svg class="a" style="left:661px;top:640px" width="17" height="17" viewBox="0 0 17 17"><rect x="1" y="1" width="14" height="14" rx="1.5" fill="#6a9ad8" stroke="#4a7ab8" stroke-width="0.6"/><rect x="3.5" y="1.5" width="9" height="5" fill="#ddd"/><rect x="4" y="9.5" width="6" height="5" fill="#eee"/><rect x="5" y="10.5" width="2" height="3" fill="#345"/><rect x="9.5" y="9.5" width="7" height="7" rx="1.2" fill="#3aa050"/><path d="M11 15 L15 11" stroke="#fff" stroke-width="1.2"/></svg>
<svg class="a" style="left:1541px;top:757px" width="14" height="14" viewBox="0 0 14 14"><path d="M5 1 L1 6 L5 10 V7.5 Q10 7 10 10 Q10 12 7.5 13 Q13 13 13 9 Q13 4.5 5 4.5 Z" fill="#e8803a"/></svg>
<svg class="a" style="left:414px;top:1152px" width="14" height="16" viewBox="0 0 14 16"><rect x="0.5" y="0.5" width="13" height="15" rx="1" fill="#f4f4f4" stroke="#555" stroke-width="0.9"/><circle cx="7" cy="8.5" r="4.5" fill="none" stroke="#e03030" stroke-width="2.2" stroke-dasharray="3 2"/><circle cx="7" cy="8.5" r="2" fill="#fff" stroke="#ccc" stroke-width="0.5"/></svg>
<svg class="a" style="left:1431px;top:1151px" width="17" height="17" viewBox="0 0 17 17"><path d="M1 9 L4 7.5 L7 12 Q10 5 16 1 Q11 7 8 16 L6 16 Z" fill="#6a9a50" stroke="#4a7a3a" stroke-width="0.5"/></svg>
<svg class="a" style="left:1513px;top:1151px" width="17" height="17" viewBox="0 0 17 17"><path d="M5.3 1 H11.7 L16 5.3 V11.7 L11.7 16 H5.3 L1 11.7 V5.3 Z" fill="#fff" stroke="#888" stroke-width="0.8"/><path d="M6 2.5 H11 L14.5 6 V11 L11 14.5 H6 L2.5 11 V6 Z" fill="#e00000"/></svg>
<svg class="a" style="left:1612px;top:1151px" width="17" height="17" viewBox="0 0 17 17"><path d="M6 8 H11 V1 H16 V12 H6 V16 L1 10 Z" fill="#6a8a50" stroke="#4a6a3a" stroke-width="0.6"/></svg>
<svg class="a" style="left:827px;top:1010px" width="119" height="119" viewBox="0 0 120 120"><defs><filter id="bl" x="-50%" y="-50%" width="200%" height="200%"><feGaussianBlur stdDeviation="3.5"/></filter><clipPath id="cp"><circle cx="55.3" cy="24" r="17"/><circle cx="86" cy="25" r="18"/><circle cx="100" cy="35" r="12"/><circle cx="102.8" cy="54.2" r="15.5"/><circle cx="103.8" cy="83.2" r="13.4"/><circle cx="67.7" cy="102.8" r="18.6"/><circle cx="18.1" cy="93.5" r="18.6"/><circle cx="31.5" cy="59.4" r="17.6"/><circle cx="64.6" cy="64.6" r="29"/><circle cx="43.9" cy="90.4" r="16.5"/><circle cx="85.2" cy="85.2" r="18.6"/><circle cx="46" cy="40.8" r="16.5"/><circle cx="80" cy="43.9" r="20.7"/><circle cx="28.4" cy="49.1" r="12.4"/><circle cx="105" cy="70" r="12"/><circle cx="60" cy="108" r="12"/><circle cx="72" cy="110" r="10"/><circle cx="12" cy="100" r="10"/><circle cx="40" cy="103" r="12"/><circle cx="90" cy="97" r="10"/><circle cx="20" cy="76" r="14"/><circle cx="14" cy="86" r="12"/></clipPath></defs><rect width="120" height="120" fill="#fff"/><g clip-path="url(#cp)"><rect width="120" height="120" fill="#000"/><g filter="url(#bl)"><circle cx="49" cy="51" r="6" fill="#fff" opacity="1.0"/><circle cx="53" cy="45" r="5" fill="#fff" opacity="0.8"/><circle cx="99.7" cy="33.6" r="6" fill="#fff" opacity="0.55"/><circle cx="35.6" cy="61.5" r="6" fill="#fff" opacity="0.45"/><circle cx="26.3" cy="70.8" r="6" fill="#fff" opacity="0.35"/><circle cx="18" cy="88.3" r="7" fill="#fff" opacity="0.35"/><circle cx="44.9" cy="89.4" r="6" fill="#fff" opacity="0.3"/><circle cx="64.6" cy="73.9" r="6" fill="#fff" opacity="0.3"/><circle cx="72.8" cy="107" r="6" fill="#fff" opacity="0.3"/><circle cx="71.8" cy="34.6" r="6" fill="#fff" opacity="0.35"/><circle cx="86.3" cy="69.7" r="6" fill="#fff" opacity="0.25"/><circle cx="57" cy="24" r="7" fill="#fff" opacity="0.2"/><circle cx="100" cy="88" r="6" fill="#fff" opacity="0.2"/><circle cx="40" cy="56" r="5" fill="#fff" opacity="0.4"/><ellipse cx="50" cy="49" rx="3" ry="6" transform="rotate(40 50 49)" fill="#fff"/></g></g></svg></body></html>
